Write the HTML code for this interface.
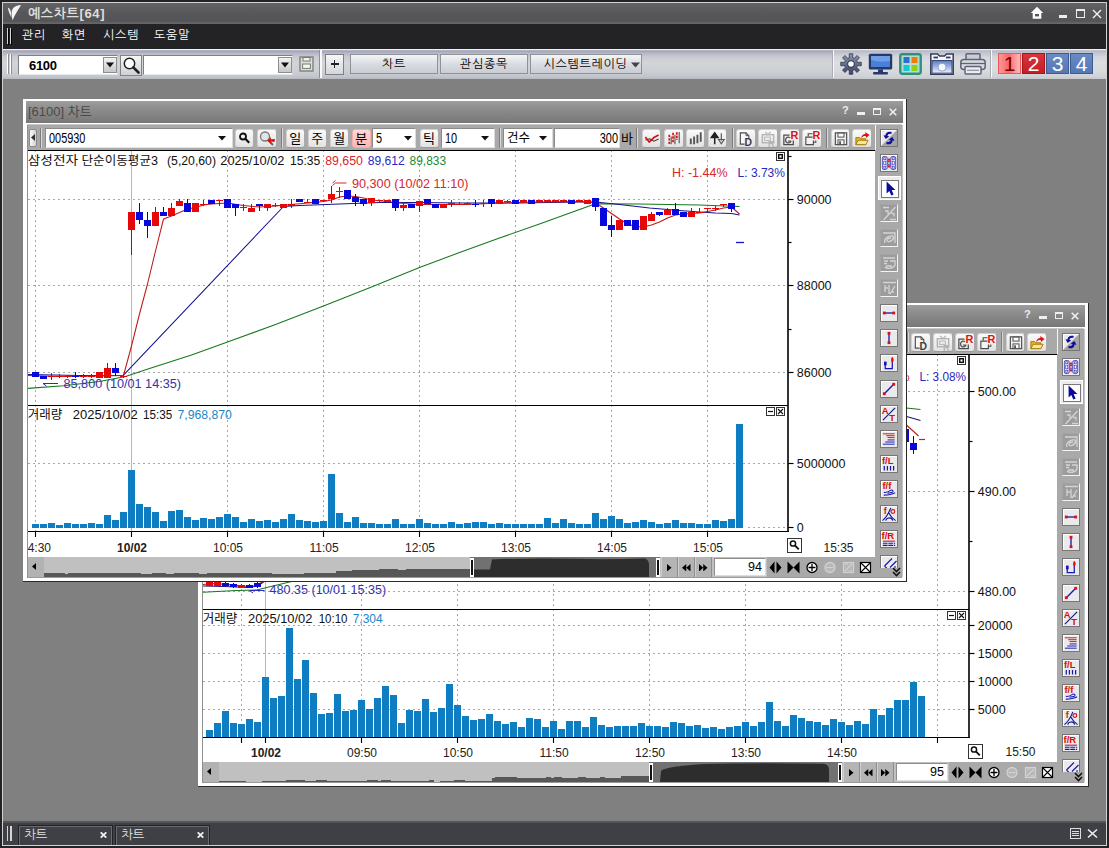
<!DOCTYPE html><html lang="ko"><head><meta charset="utf-8"><title>예스차트</title><style>
html,body{margin:0;padding:0}
body{width:1109px;height:848px;overflow:hidden;background:#808080;position:relative;font-family:'Liberation Sans','Noto Sans CJK KR',sans-serif;font-size:12px;color:#000}
div,span,svg{box-sizing:border-box}
.a{position:absolute}
.t{position:absolute;white-space:nowrap;line-height:1}
.btn{position:absolute;border:1px solid #8e9299;background:linear-gradient(#f4f5f7,#d9dce1 50%,#c9ccd3);text-align:center;font-family:'Liberation Sans','NanumGothic','Noto Sans CJK KR',sans-serif;font-size:12px;line-height:18px;color:#000}
.cb{position:absolute;border-radius:3px;background:linear-gradient(#fafafa,#e2e2e2);border:1px solid #d0d0d0;border-bottom-color:#9a9a9a;border-right-color:#aaa}
.ti{position:absolute;width:18px;height:18px;background:#e9e9e9;border:1px solid #f4f4f4;border-right-color:#777;border-bottom-color:#777}
</style></head><body><div style="position:absolute;left:0px;top:0px;width:1109px;height:848px;background:#232325"></div><div style="position:absolute;left:2px;top:2px;width:1105px;height:844px;background:#d2d2d4"></div><div style="position:absolute;left:3px;top:3px;width:1103px;height:842px;background:#808080"></div><div style="position:absolute;left:3px;top:3px;width:1103px;height:21px;background:linear-gradient(#626264,#58585a 45%,#545456 85%,#6a6a6c)"></div><svg class="a" style="left:6px;top:4px" width="18" height="18" viewBox="0 0 18 18"><path d="M15.2 1 C12 1.2 9.5 2 8 3.2 C5.4 5.6 4.8 9.5 6.7 16.2 C7.2 12 8.5 6.8 15.2 1Z" fill="#f4f4f4"/><path d="M15.2 1 C11.5 6.5 8.5 11.5 6.7 16.2 C6 12 7 6 15.2 1Z" fill="#f4f4f4"/><path d="M1.8 3.4 C3.6 4 5 6 5 9 C5 11 5.3 12.5 5.7 13.7 C4 11 2.4 7 1.8 3.4Z" fill="#ededed"/></svg><div class="t" style="left:28px;top:7px;font-family:'Liberation Sans','NanumGothic','Noto Sans CJK KR',sans-serif;font-size:13px;font-weight:bold;color:#dededa;letter-spacing:0.65px">예스차트[64]</div><svg class="a" style="left:1030px;top:6px" width="14" height="14" viewBox="0 0 14 14"><path d="M7 0.8 L13.2 7 L11.3 7 L11.3 12.8 L2.7 12.8 L2.7 7 L0.8 7Z" fill="#fff"/><rect x="5" y="8" width="4" height="2.4" fill="#58585a"/></svg><div style="position:absolute;left:1059px;top:15.2px;width:8px;height:2.4px;background:#ececec"></div><div style="position:absolute;left:1076px;top:9px;width:9px;height:9px;border:1.4px solid #ececec;border-top-width:2.2px"></div><svg class="a" style="left:1092px;top:9px" width="10" height="10" viewBox="0 0 10 10"><path d="M1 1 L9 9 M9 1 L1 9" stroke="#f0f0f0" stroke-width="1.4"/></svg><div style="position:absolute;left:3px;top:24px;width:1103px;height:25px;background:#232325"></div><div style="position:absolute;left:7px;top:28px;width:1.3px;height:16px;background:#d4d4d4;box-shadow:1px 1px 0 #000"></div><div style="position:absolute;left:10px;top:28px;width:1.3px;height:16px;background:#d4d4d4;box-shadow:1px 1px 0 #000"></div><div class="t" style="left:22px;top:29px;font-family:'Liberation Sans','NanumGothic','Noto Sans CJK KR',sans-serif;font-size:12px;color:#fff;letter-spacing:0.8px">관리</div><div class="t" style="left:62px;top:29px;font-family:'Liberation Sans','NanumGothic','Noto Sans CJK KR',sans-serif;font-size:12px;color:#fff;letter-spacing:0.8px">화면</div><div class="t" style="left:103px;top:29px;font-family:'Liberation Sans','NanumGothic','Noto Sans CJK KR',sans-serif;font-size:12px;color:#fff;letter-spacing:0.8px">시스템</div><div class="t" style="left:154px;top:29px;font-family:'Liberation Sans','NanumGothic','Noto Sans CJK KR',sans-serif;font-size:12px;color:#fff;letter-spacing:0.8px">도움말</div><div style="position:absolute;left:3px;top:49px;width:1103px;height:30px;background:linear-gradient(#eeeef4 0,#eeeef4 1.2px,#9d9fb3 1.6px,#b4b6c3 4px,#c9cbd1 8px,#d2d4d7 14px,#cdd0d3 22px,#c1c4c9 28px,#b6b9bf 30px)"></div><div style="position:absolute;left:834px;top:50px;width:272px;height:29px;background:rgba(255,255,255,0.22)"></div><div style="position:absolute;left:7px;top:54px;width:1px;height:20px;background:#fff"></div><div style="position:absolute;left:8px;top:54px;width:1px;height:20px;background:#8a8d94"></div><div style="position:absolute;left:10px;top:54px;width:1px;height:20px;background:#fff"></div><div style="position:absolute;left:11px;top:54px;width:1px;height:20px;background:#8a8d94"></div><div style="position:absolute;left:18px;top:55px;width:100px;height:20px;background:#fff;border:1px solid #7c8087;border-right-color:#cfd2d8;border-bottom-color:#e4e6ea"></div><div class="t" style="left:29px;top:59px;font-family:'Liberation Sans','NanumGothic','Noto Sans CJK KR',sans-serif;font-size:13px;font-weight:bold;letter-spacing:-0.3px">6100</div><div style="position:absolute;left:103px;top:57px;width:14px;height:16px;background:linear-gradient(#f2f2f2,#c8c8c8);border:1px solid #8d8d8d"></div><svg class="a" style="left:106px;top:62px" width="8" height="6"><path d="M0 0.5 L8 0.5 L4 5.5Z" fill="#111"/></svg><div style="position:absolute;left:120px;top:55px;width:22px;height:21px;background:linear-gradient(#f6f6f6,#cfd1d5);border:1px solid #80838a"></div><svg class="a" style="left:122px;top:56px" width="19" height="19" viewBox="0 0 19 19"><circle cx="7.5" cy="7.5" r="5.2" fill="#fdfdfd" stroke="#222" stroke-width="1.5"/><path d="M11.3 11.3 L16.5 16.5" stroke="#222" stroke-width="2.6" stroke-linecap="round"/></svg><div style="position:absolute;left:143px;top:55px;width:150px;height:20px;background:#fff;border:1px solid #7c8087;border-right-color:#cfd2d8;border-bottom-color:#e4e6ea"></div><div style="position:absolute;left:278px;top:57px;width:14px;height:16px;background:linear-gradient(#f2f2f2,#c8c8c8);border:1px solid #8d8d8d"></div><svg class="a" style="left:281px;top:62px" width="8" height="6"><path d="M0 0.5 L8 0.5 L4 5.5Z" fill="#111"/></svg><svg class="a" style="left:299px;top:56px" width="15" height="16" viewBox="0 0 15 16"><rect x="1" y="1" width="13" height="14" fill="#dcdedb" stroke="#787a74" stroke-width="1.3"/><rect x="4" y="1.5" width="7" height="3.5" fill="#f3f3ef" stroke="#787a74" stroke-width="1"/><rect x="3.6" y="8" width="7.8" height="4.4" fill="#f6f6f2" stroke="#787a74" stroke-width="1"/></svg><div style="position:absolute;left:319px;top:50px;width:1px;height:28px;background:#8c8f96"></div><div style="position:absolute;left:320px;top:50px;width:2px;height:28px;background:#f7f8fa"></div><div style="position:absolute;left:325px;top:54px;width:19px;height:21px;background:linear-gradient(#f6f6f6,#d4d6da);border:1px solid #7d8087"></div><div style="position:absolute;left:330.5px;top:63.2px;width:8px;height:1.8px;background:#222"></div><div style="position:absolute;left:333.6px;top:60px;width:1.8px;height:8px;background:#222"></div><div class="btn" style="left:350px;top:54px;width:88px;height:20px;letter-spacing:0.7px">차트</div><div class="btn" style="left:440px;top:54px;width:88px;height:20px;letter-spacing:0.7px">관심종목</div><div class="btn" style="left:530px;top:54px;width:112px;height:20px;padding-right:1px;letter-spacing:0.7px">시스템트레이딩</div><svg class="a" style="left:630.5px;top:62px" width="9" height="6"><path d="M0 0.5 L9 0.5 L4.5 5.5Z" fill="#444"/></svg><div style="position:absolute;left:832px;top:50px;width:1px;height:28px;background:#a9acb5"></div><div style="position:absolute;left:833px;top:50px;width:1px;height:28px;background:#f7f8fa"></div><svg class="a" style="left:840px;top:53px" width="22" height="22" viewBox="-11 -11 22 22"><defs><linearGradient id="gg" x1="0" y1="0" x2="0" y2="1"><stop offset="0" stop-color="#8e96ac"/><stop offset="1" stop-color="#3c4564"/></linearGradient></defs><g fill="url(#gg)" stroke="#2e3550" stroke-width="0.8"><path d="M-1.81 -10.24 L1.81 -10.24 L1.60 -6.40 L3.40 -5.66 L5.97 -8.52 L8.52 -5.97 L5.66 -3.40 L6.40 -1.60 L10.24 -1.81 L10.24 1.81 L6.40 1.60 L5.66 3.40 L8.52 5.97 L5.97 8.52 L3.40 5.66 L1.60 6.40 L1.81 10.24 L-1.81 10.24 L-1.60 6.40 L-3.40 5.66 L-5.97 8.52 L-8.52 5.97 L-5.66 3.40 L-6.40 1.60 L-10.24 1.81 L-10.24 -1.81 L-6.40 -1.60 L-5.66 -3.40 L-8.52 -5.97 L-5.97 -8.52 L-3.40 -5.66 L-1.60 -6.40Z"/></g><circle r="3.7" fill="#2e3550"/><circle r="2.8" fill="#fbfbfd"/></svg><svg class="a" style="left:868px;top:53px" width="25" height="22" viewBox="0 0 25 22"><rect x="0.8" y="0.8" width="23.4" height="15.6" rx="1.5" fill="#27386b"/><rect x="3" y="3" width="19" height="11" fill="#4a7fd6"/><path d="M3 3 H22 V8 Q12 10 3 7Z" fill="#6ea0ea"/><rect x="10" y="16.4" width="5" height="3" fill="#27386b"/><rect x="5" y="19" width="15" height="2.4" rx="1" fill="#27386b"/></svg><svg class="a" style="left:899px;top:53px" width="23" height="22" viewBox="0 0 23 22"><rect x="1.2" y="1.2" width="20.6" height="19.6" rx="2" fill="#8ccdbd" stroke="#2f8f7c" stroke-width="2.2"/><rect x="3.2" y="3" width="16.6" height="16" fill="#c4e6dc" opacity="0.7"/><rect x="4.5" y="4" width="6" height="6" fill="#2b6fd0"/><rect x="12.5" y="4" width="6" height="6" fill="#f07a10"/><rect x="4.5" y="12" width="6" height="6" fill="#19c6d8"/><rect x="12.5" y="12" width="6" height="6" fill="#8fd11a"/></svg><svg class="a" style="left:930px;top:53px" width="24" height="22" viewBox="0 0 24 22"><defs><linearGradient id="cg" x1="0" y1="0" x2="0" y2="1"><stop offset="0" stop-color="#5a78c8"/><stop offset="1" stop-color="#eef2fc"/></linearGradient></defs><path d="M0.8 1 H7.5 L9.5 3 H14.5 L16.5 1 H23.2 V21.2 H0.8Z" fill="#f4f6fb" stroke="#323c60" stroke-width="1.5"/><rect x="3.5" y="3.6" width="4.5" height="1.8" fill="#323c60"/><rect x="16" y="3.6" width="4.5" height="1.8" fill="#323c60"/><rect x="2" y="7.5" width="20" height="12.6" fill="url(#cg)" stroke="#323c60" stroke-width="0.9"/><circle cx="12" cy="14.2" r="4" fill="#f6f8fd" stroke="#8a9ad0" stroke-width="0.9"/></svg><svg class="a" style="left:960px;top:53px" width="26" height="22" viewBox="0 0 26 22"><rect x="6" y="0.8" width="14" height="8" rx="1" fill="#c9cdd6" stroke="#5d6476" stroke-width="1.5"/><rect x="0.8" y="6.5" width="24.4" height="10" rx="3" fill="#d7dae1" stroke="#5d6476" stroke-width="1.5"/><path d="M1 10.5 H25" stroke="#5d6476" stroke-width="1.3"/><rect x="5" y="13.5" width="16" height="7.5" rx="1" fill="#e9ebf0" stroke="#5d6476" stroke-width="1.5"/><path d="M7 17.3 H19" stroke="#8a90a0" stroke-width="1.2"/></svg><div style="position:absolute;left:990px;top:50px;width:1px;height:28px;background:#a9acb5"></div><div style="position:absolute;left:991px;top:50px;width:1px;height:28px;background:#f7f8fa"></div><div class="a" style="left:998px;top:53px;width:23px;height:21px;background:linear-gradient(90deg,#fa9a9a,#f66 45%,#fbb);border:1px solid #e55;color:#7a0000;font-size:21px;line-height:20px;text-align:center;font-family:'Liberation Sans','Noto Sans CJK KR',sans-serif">1</div><div class="a" style="left:1022px;top:53px;width:23px;height:21px;background:linear-gradient(#d8343a,#c41e26);border:1px solid #a2161c;color:#fff;font-size:21px;line-height:20px;text-align:center;font-family:'Liberation Sans','Noto Sans CJK KR',sans-serif">2</div><div class="a" style="left:1046px;top:53px;width:23px;height:21px;background:linear-gradient(#6a8bc4,#5577b3);border:1px solid #3d5a93;color:#fff;font-size:21px;line-height:20px;text-align:center;font-family:'Liberation Sans','Noto Sans CJK KR',sans-serif">3</div><div class="a" style="left:1070px;top:53px;width:23px;height:21px;background:linear-gradient(#6a8bc4,#5577b3);border:1px solid #3d5a93;color:#fff;font-size:21px;line-height:20px;text-align:center;font-family:'Liberation Sans','Noto Sans CJK KR',sans-serif">4</div><div style="position:absolute;left:3px;top:821px;width:1103px;height:24px;background:#3f4046"></div><div style="position:absolute;left:3px;top:821px;width:1103px;height:2px;background:#55565a"></div><div style="position:absolute;left:7px;top:826px;width:1.3px;height:14.5px;background:#d4d4d4"></div><div style="position:absolute;left:10px;top:826px;width:1.5px;height:14.5px;background:#d4d4d4"></div><div style="position:absolute;left:18px;top:825px;width:95px;height:20px;background:#222226"></div><div style="position:absolute;left:19px;top:826px;width:93px;height:19px;background:#6a6b70"></div><div style="position:absolute;left:20px;top:827px;width:91px;height:18px;background:#3f4046"></div><div class="t" style="left:24px;top:829px;font-family:'Liberation Sans','NanumGothic','Noto Sans CJK KR',sans-serif;font-size:12.5px;color:#e4e4e4">차트</div><svg class="a" style="left:100px;top:832px" width="7" height="6" viewBox="0 0 7 6"><path d="M0.7 0.3 L6.3 5.7 M6.3 0.3 L0.7 5.7" stroke="#f0f0f0" stroke-width="1.7"/></svg><div style="position:absolute;left:115px;top:825px;width:95px;height:20px;background:#222226"></div><div style="position:absolute;left:116px;top:826px;width:93px;height:19px;background:#6a6b70"></div><div style="position:absolute;left:117px;top:827px;width:91px;height:18px;background:#3f4046"></div><div class="t" style="left:121px;top:829px;font-family:'Liberation Sans','NanumGothic','Noto Sans CJK KR',sans-serif;font-size:12.5px;color:#e4e4e4">차트</div><svg class="a" style="left:197px;top:832px" width="7" height="6" viewBox="0 0 7 6"><path d="M0.7 0.3 L6.3 5.7 M6.3 0.3 L0.7 5.7" stroke="#f0f0f0" stroke-width="1.7"/></svg><svg class="a" style="left:1070px;top:828px" width="11" height="11" viewBox="0 0 11 11"><rect x="0.5" y="0.5" width="10" height="10" fill="none" stroke="#ddd"/><path d="M2 3.5 H9 M2 5.5 H9 M2 7.5 H9" stroke="#ddd"/></svg><svg class="a" style="left:1087px;top:828px" width="11" height="11" viewBox="0 0 11 11"><path d="M1 1.5 L10 9.5 M10 1.5 L1 9.5" stroke="#f0f0f0" stroke-width="1.6"/></svg><div style="position:absolute;left:198px;top:303px;width:891px;height:484px;background:#fff;border-right:1px solid #2a2a2a;border-bottom:1px solid #2a2a2a"></div><div style="position:absolute;left:201px;top:305px;width:884px;height:21.5px;background:linear-gradient(#9e9e9e,#8d8d8d 35%,#828282 70%,#787878)"></div><div class="t" style="left:203px;top:309px;font-family:'Liberation Sans','Noto Sans CJK KR',sans-serif;font-size:13px;color:#4a4a4a">[6100] 차트</div><div class="t" style="left:1024px;top:309px;font-family:'Liberation Sans','Noto Sans CJK KR',sans-serif;font-size:11px;font-weight:bold;color:#ececec">?</div><div style="position:absolute;left:1039px;top:316px;width:8px;height:3px;background:#efefef"></div><div style="position:absolute;left:1055px;top:312px;width:8px;height:7px;border:1.5px solid #efefef;border-top-width:2px"></div><svg class="a" style="left:1071px;top:312px" width="8" height="8" viewBox="0 0 8 8"><path d="M0.7 0.7 L7.3 7.3 M7.3 0.7 L0.7 7.3" stroke="#f2f2f2" stroke-width="1.5"/></svg><div style="position:absolute;left:202px;top:329px;width:855px;height:25px;background:#a9a9a9"></div><div style="position:absolute;left:202px;top:328px;width:882px;height:1px;background:#c9c9c9"></div><div style="position:absolute;left:204px;top:333px;width:8px;height:18px;background:linear-gradient(90deg,#fbfbfb,#cfcfcf);border:1px solid #8b8b8b;border-radius:2px"></div><svg class="a" style="left:206px;top:338px" width="4" height="7"><path d="M4 0 L4 7 L0 3.5Z" fill="#333"/></svg><div style="position:absolute;left:215px;top:332px;width:1px;height:20px;background:#7d7d7d"></div><div style="position:absolute;left:216px;top:332px;width:1px;height:20px;background:#d8d8d8"></div><div style="position:absolute;left:220px;top:331.5px;width:188px;height:20.5px;background:#fff;border:1px solid #8a8a8a;border-right-color:#dcdcdc;border-bottom-color:#e6e6e6"></div><div class="t" style="left:223.5px;top:334.5px;font-family:'Liberation Sans','Noto Sans CJK KR',sans-serif;font-size:14px;transform:scaleX(0.78);transform-origin:0 0">005930</div><svg class="a" style="left:393px;top:340px" width="8" height="5"><path d="M0 0 L8 0 L4 4.5Z" fill="#111"/></svg><div class="cb" style="left:410px;top:332.5px;width:19px;height:19.5px;"><svg width="17" height="17" viewBox="0 0 17 17"><circle cx="7" cy="6.5" r="3" fill="none" stroke="#111" stroke-width="1.8"/><path d="M9.3 8.8 L13.2 12.7" stroke="#111" stroke-width="2.2"/></svg></div><div class="cb" style="left:432px;top:332.5px;width:20px;height:19.5px;"><svg width="18" height="17" viewBox="0 0 18 17"><circle cx="7" cy="6.5" r="4.5" fill="#e4e4e4" stroke="#777" stroke-width="1.3"/><path d="M10 10 L15 15" stroke="#666" stroke-width="2"/><path d="M9 10.5 L13 7 L12.8 9.3 L17 9 L16.5 12 L13 11.6 L13.5 14Z" fill="#e01010"/></svg></div><div style="position:absolute;left:456px;top:332px;width:1px;height:20px;background:#7d7d7d"></div><div style="position:absolute;left:457px;top:332px;width:1px;height:20px;background:#d8d8d8"></div><div class="cb" style="left:461px;top:332.5px;width:18.5px;height:19.5px;font-family:'Liberation Sans','Noto Sans CJK KR',sans-serif;font-size:13px;line-height:17px;text-align:center">일</div><div class="cb" style="left:483px;top:332.5px;width:18.5px;height:19.5px;font-family:'Liberation Sans','Noto Sans CJK KR',sans-serif;font-size:13px;line-height:17px;text-align:center">주</div><div class="cb" style="left:505px;top:332.5px;width:18.5px;height:19.5px;font-family:'Liberation Sans','Noto Sans CJK KR',sans-serif;font-size:13px;line-height:17px;text-align:center">월</div><div class="cb" style="left:527px;top:332.5px;width:18.5px;height:19.5px;background:linear-gradient(#ffd9d9,#ffb4b4);border-color:#f0b0b0;font-family:'Liberation Sans','Noto Sans CJK KR',sans-serif;font-size:13px;line-height:17px;text-align:center">분</div><div style="position:absolute;left:547px;top:331.5px;width:44px;height:20.5px;background:#fff;border:1px solid #8a8a8a;border-right-color:#dcdcdc;border-bottom-color:#e6e6e6"></div><div class="t" style="left:550.5px;top:334.5px;font-family:'Liberation Sans','Noto Sans CJK KR',sans-serif;font-size:14px;transform:scaleX(0.78);transform-origin:0 0">5</div><svg class="a" style="left:579px;top:340px" width="8" height="5"><path d="M0 0 L8 0 L4 4.5Z" fill="#111"/></svg><div class="cb" style="left:594.5px;top:332.5px;width:19px;height:19.5px;font-family:'Liberation Sans','Noto Sans CJK KR',sans-serif;font-size:13px;line-height:17px;text-align:center">틱</div><div style="position:absolute;left:616px;top:331.5px;width:54px;height:20.5px;background:#fff;border:1px solid #8a8a8a;border-right-color:#dcdcdc;border-bottom-color:#e6e6e6"></div><div class="t" style="left:619.5px;top:334.5px;font-family:'Liberation Sans','Noto Sans CJK KR',sans-serif;font-size:14px;transform:scaleX(0.78);transform-origin:0 0">10</div><svg class="a" style="left:656px;top:340px" width="8" height="5"><path d="M0 0 L8 0 L4 4.5Z" fill="#111"/></svg><div style="position:absolute;left:674px;top:332px;width:1px;height:20px;background:#7d7d7d"></div><div style="position:absolute;left:675px;top:332px;width:1px;height:20px;background:#d8d8d8"></div><div style="position:absolute;left:678px;top:331.5px;width:50px;height:20.5px;background:#fff;border:1px solid #8a8a8a;border-right-color:#dcdcdc;border-bottom-color:#e6e6e6"></div><div class="t" style="left:682px;top:335.5px;font-family:'Liberation Sans','Noto Sans CJK KR',sans-serif;font-size:12.5px">건수</div><svg class="a" style="left:714px;top:340px" width="8" height="5"><path d="M0 0 L8 0 L4 4.5Z" fill="#111"/></svg><div style="position:absolute;left:729px;top:331.5px;width:66px;height:20.5px;background:#fff;border:1px solid #8a8a8a;border-right-color:#dcdcdc;border-bottom-color:#e6e6e6"></div><div class="t" style="left:729px;width:64px;text-align:right;top:334.5px;font-family:'Liberation Sans','Noto Sans CJK KR',sans-serif;font-size:14px;transform:scaleX(0.78);transform-origin:100% 0">300</div><div class="t" style="left:796px;top:335.5px;font-family:'Liberation Sans','Noto Sans CJK KR',sans-serif;font-size:13px">바</div><div style="position:absolute;left:811px;top:332px;width:1px;height:20px;background:#7d7d7d"></div><div style="position:absolute;left:812px;top:332px;width:1px;height:20px;background:#d8d8d8"></div><div class="cb" style="left:816.5px;top:332.5px;width:19.5px;height:19.5px;"><svg width="18" height="17" viewBox="0 0 19 18" style="display:block"><path d="M2.5 10.5 L7 9.2 L11.5 11.8 L16.5 9.5" stroke="#3a3a3a" stroke-width="1.1" fill="none"/><path d="M2.5 7.5 L6.5 12.8 L11.5 8 L16.5 5.2" stroke="#e01010" stroke-width="1.8" fill="none" stroke-linejoin="round"/></svg></div><div class="cb" style="left:839px;top:332.5px;width:19.5px;height:19.5px;"><svg width="18" height="17" viewBox="0 0 19 18" style="display:block"><path d="M4.5 5 v10 M8.5 3 v11 M12.5 2.5 v8" stroke="#e01010" stroke-width="1.8" stroke-dasharray="2.5 1.2"/><path d="M6.5 7 v8 M10.5 5 v10 M15 2 v12" stroke="#555" stroke-width="1.2"/></svg></div><div class="cb" style="left:860.5px;top:332.5px;width:19.5px;height:19.5px;"><svg width="18" height="17" viewBox="0 0 19 18" style="display:block"><path d="M4 9 v6 M7.5 7 v8 M11 5 v9 M14.5 2.5 v10" stroke="#555" stroke-width="2"/></svg></div><div class="cb" style="left:882.5px;top:332.5px;width:19.5px;height:19.5px;"><svg width="18" height="17" viewBox="0 0 19 18" style="display:block"><path d="M6 15 v-9 M2.5 8 L6 3 L9.5 8Z" fill="#222" stroke="#222" stroke-width="1.6"/><path d="M13 3.5 v8 M10 10 L13 14.5 L16 10Z" fill="#eee" stroke="#555" stroke-width="1.2"/></svg></div><div class="cb" style="left:911px;top:332.5px;width:19.5px;height:19.5px;"><svg width="18" height="17" viewBox="0 0 19 18" style="display:block"><path d="M3.5 3 h6 l3 3 v9 h-9Z" fill="#f8f8f8" stroke="#4c4c4c" stroke-width="1.2"/><path d="M9.5 3 v3 h3" fill="none" stroke="#4c4c4c" stroke-width="1"/><rect x="8" y="8.5" width="8" height="8.5" fill="#f0f0f0"/><text x="8" y="17" font-size="11" font-weight="bold" fill="#3c3c3c" font-family="Liberation Sans,sans-serif">D</text></svg></div><div class="cb" style="left:933px;top:332.5px;width:19.5px;height:19.5px;"><svg width="18" height="17" viewBox="0 0 19 18" style="display:block"><path d="M6.5 2 l3 3 l3 -3" stroke="#b4b4b4" stroke-width="1.2" fill="none"/><rect x="3.5" y="5" width="12" height="8.5" fill="none" stroke="#b4b4b4" stroke-width="1.5"/><rect x="6" y="7.5" width="6" height="3.5" fill="none" stroke="#b4b4b4" stroke-width="1"/><text x="9.5" y="17.5" font-size="9.5" font-weight="bold" fill="#b4b4b4" font-family="Liberation Sans,sans-serif">R</text></svg></div><div class="cb" style="left:955px;top:332.5px;width:19.5px;height:19.5px;"><svg width="18" height="17" viewBox="0 0 19 18" style="display:block"><path d="M9 5.5 H3 V15.5 H13 V11" fill="none" stroke="#4c4c4c" stroke-width="1.3"/><path d="M10.5 11.8 a3 3 0 1 1 -1 -3.6 M7.5 11.8 h3.4" stroke="#5a5a5a" stroke-width="1.4" fill="none"/><text x="10" y="10" font-size="11.5" font-weight="bold" fill="#e01010" font-family="Liberation Sans,sans-serif">R</text></svg></div><div class="cb" style="left:977px;top:332.5px;width:19.5px;height:19.5px;"><svg width="18" height="17" viewBox="0 0 19 18" style="display:block"><path d="M5.5 7 V4 H10" fill="none" stroke="#4c4c4c" stroke-width="1.2"/><path d="M10 7.5 H3 V15.5 H11 V11" fill="#f4f4f4" stroke="#4c4c4c" stroke-width="1.2"/><path d="M11 13 H13.5 V11" fill="none" stroke="#4c4c4c" stroke-width="1.2"/><text x="10" y="10" font-size="11.5" font-weight="bold" fill="#e01010" font-family="Liberation Sans,sans-serif">R</text></svg></div><div class="cb" style="left:1005.5px;top:332.5px;width:19.5px;height:19.5px;"><svg width="18" height="17" viewBox="0 0 19 18" style="display:block"><rect x="3.5" y="3" width="12" height="12.5" fill="#f0f0f0" stroke="#4a4a4a" stroke-width="1.2"/><rect x="6.3" y="3.3" width="6.4" height="4.2" fill="#fafafa" stroke="#4a4a4a" stroke-width="1"/><rect x="6.3" y="10.5" width="6.4" height="5" fill="#fafafa" stroke="#4a4a4a" stroke-width="1"/><rect x="7.6" y="12" width="1.8" height="3.5" fill="#4a4a4a"/></svg></div><div class="cb" style="left:1027px;top:332.5px;width:19.5px;height:19.5px;"><svg width="18" height="17" viewBox="0 0 19 18" style="display:block"><path d="M3 15.5 v-7.5 h4 l1.3 1.3 h5.2 v6.2Z" fill="#e6b422" stroke="#9a7406" stroke-width="0.9"/><path d="M3 15.5 l2.4 -4.6 h10.6 l-2.4 4.6Z" fill="#fde58e" stroke="#9a7406" stroke-width="0.9"/><path d="M8.5 8.5 C9.3 5.2 11.2 4 13.2 4.2 L12.8 2 L17.5 5.2 L13.8 8.4 L13.5 6.3 C11.8 6 10.2 6.6 8.5 8.5Z" fill="#e01010"/></svg></div><div style="position:absolute;left:906.5px;top:332px;width:1px;height:20px;background:#7d7d7d"></div><div style="position:absolute;left:907.5px;top:332px;width:1px;height:20px;background:#d8d8d8"></div><div style="position:absolute;left:1001px;top:332px;width:1px;height:20px;background:#7d7d7d"></div><div style="position:absolute;left:1002px;top:332px;width:1px;height:20px;background:#d8d8d8"></div><div style="position:absolute;left:1057px;top:329px;width:28px;height:453px;background:#a9a9a9"></div><div style="position:absolute;left:1084px;top:329px;width:1px;height:453px;background:#c4c4c4"></div><div style="position:absolute;left:1056.5px;top:329px;width:1.5px;height:25px;background:#f4f4f4"></div><div style="position:absolute;left:1062px;top:333.0px;width:18px;height:18px;background:#eaeaea;border:1px solid #767676;box-shadow:inset 1px 1px 0 #fff"></div><svg class="a" style="left:1063px;top:334.0px" width="16" height="16" viewBox="0 0 17 17"><path d="M0 17 L17 0 L17 17Z" fill="#a4a4a4"/><path d="M11.2 2 L11.2 4.2 C8.6 3.6 7 4.6 6.9 6.3 L8.9 6.6 L5 9.6 L2.6 5.6 L4.7 5.9 C4.8 2.6 8 1.2 11.2 2Z" fill="#0c0c9c"/><path d="M5.8 15 L5.8 12.8 C8.4 13.4 10 12.4 10.1 10.7 L8.1 10.4 L12 7.4 L14.4 11.4 L12.3 11.1 C12.2 14.4 9 15.8 5.8 15Z" fill="#0c0c9c"/></svg><div style="position:absolute;left:1062px;top:358.05px;width:18px;height:18px;background:#eaeaea;border:1px solid #767676;box-shadow:inset 1px 1px 0 #fff"></div><svg class="a" style="left:1063px;top:359.05px" width="16" height="16" viewBox="0 0 17 17"><rect x="1.4" y="1.6" width="5.2" height="13.8" rx="1.8" fill="#f4f4ff" stroke="#3030b8" stroke-width="0.9"/><rect x="10.4" y="1.6" width="5.2" height="13.8" rx="1.8" fill="#f4f4ff" stroke="#3030b8" stroke-width="0.9"/><rect x="2.9" y="3" width="2.2" height="2" fill="#fff" stroke="#3030b8" stroke-width="0.7"/><rect x="2.9" y="6.6" width="2.2" height="3.8" fill="#fff" stroke="#3030b8" stroke-width="0.7"/><rect x="2.9" y="12" width="2.2" height="2" fill="#fff" stroke="#3030b8" stroke-width="0.7"/><rect x="11.9" y="3" width="2.2" height="2" fill="#fff" stroke="#3030b8" stroke-width="0.7"/><rect x="11.9" y="6.6" width="2.2" height="3.8" fill="#fff" stroke="#3030b8" stroke-width="0.7"/><rect x="11.9" y="12" width="2.2" height="2" fill="#fff" stroke="#3030b8" stroke-width="0.7"/><rect x="7.5" y="6.8" width="2" height="3.4" fill="#fff" stroke="#3030b8" stroke-width="0.7"/><path d="M8.5 3 L10 5.4 H7Z M8.5 14 L10 11.6 H7Z" fill="#e01010"/><path d="M6.8 6 h3.4 M6.8 11 h3.4" stroke="#e01010" stroke-width="0.9"/></svg><div style="position:absolute;left:1060px;top:380.40000000000003px;width:23px;height:24px;background:#ececec;border:1px solid #fff"></div><div style="position:absolute;left:1063.3px;top:383.90000000000003px;width:17.6px;height:17.8px;background:#fff;border:1px solid #7a7a7a"></div><svg class="a" style="left:1063.5px;top:384.3px" width="17" height="17" viewBox="0 0 17 17"><path d="M4.6 1.6 L4.6 13.4 L7.3 10.9 L9.3 15.6 L11.6 14.6 L9.6 10 L13.4 10Z" fill="#0a0a9c"/></svg><div style="position:absolute;left:1062px;top:408.15px;width:18px;height:18px;background:#9c9c9c;border-right:1.5px solid #f4f4f4;border-bottom:1.5px solid #f4f4f4;border-left:1px solid #a4a4a4;border-top:1px solid #a4a4a4"></div><svg class="a" style="left:1062.5px;top:408.65px" width="17" height="17" viewBox="0 0 17 17"><path d="M2 2.5 h6 M9 14.5 h6 M14.5 2 L2.5 15 M4 6 h3 v3 M10 8.5 h3 v3" stroke="#d4d4d4" stroke-width="1.3" fill="none"/></svg><div style="position:absolute;left:1062px;top:433.2px;width:18px;height:18px;background:#9c9c9c;border-right:1.5px solid #f4f4f4;border-bottom:1.5px solid #f4f4f4;border-left:1px solid #a4a4a4;border-top:1px solid #a4a4a4"></div><svg class="a" style="left:1062.5px;top:433.7px" width="17" height="17" viewBox="0 0 17 17"><path d="M2 3 h12 v10 M4 13 c-2 -4 4 -8 8 -7 c2 3 -3 7 -6 5 c0 -2 2 -3 4 -3" stroke="#d4d4d4" stroke-width="1.3" fill="none"/></svg><div style="position:absolute;left:1062px;top:458.25px;width:18px;height:18px;background:#9c9c9c;border-right:1.5px solid #f4f4f4;border-bottom:1.5px solid #f4f4f4;border-left:1px solid #a4a4a4;border-top:1px solid #a4a4a4"></div><svg class="a" style="left:1062.5px;top:458.75px" width="17" height="17" viewBox="0 0 17 17"><path d="M2 3 h12 M3 6 h4 M3 8.5 h3 M9 6 h5 v4 c-2 4 -8 4 -10 2 M5 11 h6" stroke="#d4d4d4" stroke-width="1.3" fill="none"/></svg><div style="position:absolute;left:1062px;top:483.3px;width:18px;height:18px;background:#9c9c9c;border-right:1.5px solid #f4f4f4;border-bottom:1.5px solid #f4f4f4;border-left:1px solid #a4a4a4;border-top:1px solid #a4a4a4"></div><svg class="a" style="left:1062.5px;top:483.8px" width="17" height="17" viewBox="0 0 17 17"><path d="M2 2.5 h13 M4 5 v7 M4 8 h3 M8 5 v9 M14 6 L9 14 M10 12 h3" stroke="#d4d4d4" stroke-width="1.3" fill="none"/></svg><div style="position:absolute;left:1062px;top:508.35px;width:18px;height:18px;background:#eaeaea;border:1px solid #767676;box-shadow:inset 1px 1px 0 #fff"></div><svg class="a" style="left:1063px;top:509.35px" width="16" height="16" viewBox="0 0 17 17"><path d="M3 8.5 h11" stroke="#1414b8" stroke-width="1.4"/><rect x="2" y="7" width="3" height="3" fill="#e01010"/><rect x="12" y="7" width="3" height="3" fill="#e01010"/></svg><div style="position:absolute;left:1062px;top:533.4px;width:18px;height:18px;background:#eaeaea;border:1px solid #767676;box-shadow:inset 1px 1px 0 #fff"></div><svg class="a" style="left:1063px;top:534.4px" width="16" height="16" viewBox="0 0 17 17"><path d="M8.5 3 v11" stroke="#1414b8" stroke-width="1.4"/><rect x="7" y="2" width="3" height="3" fill="#e01010"/><rect x="7" y="12" width="3" height="3" fill="#e01010"/></svg><div style="position:absolute;left:1062px;top:558.45px;width:18px;height:18px;background:#eaeaea;border:1px solid #767676;box-shadow:inset 1px 1px 0 #fff"></div><svg class="a" style="left:1063px;top:559.45px" width="16" height="16" viewBox="0 0 17 17"><path d="M4.5 8 v6.5 h7.5 v-8" stroke="#1414b8" stroke-width="1.3" fill="none"/><rect x="3.2" y="7" width="2.8" height="4" fill="#1414b8"/><path d="M12 2 v6" stroke="#e01010" stroke-width="1.2"/><rect x="10.8" y="3.5" width="2.6" height="3.2" fill="#e01010"/></svg><div style="position:absolute;left:1062px;top:583.5px;width:18px;height:18px;background:#eaeaea;border:1px solid #767676;box-shadow:inset 1px 1px 0 #fff"></div><svg class="a" style="left:1063px;top:584.5px" width="16" height="16" viewBox="0 0 17 17"><path d="M3.5 13.5 L13.5 3.5" stroke="#1414b8" stroke-width="1.4"/><rect x="2" y="12" width="3" height="3" fill="#e01010"/><rect x="12" y="2" width="3" height="3" fill="#e01010"/></svg><div style="position:absolute;left:1062px;top:608.55px;width:18px;height:18px;background:#eaeaea;border:1px solid #767676;box-shadow:inset 1px 1px 0 #fff"></div><svg class="a" style="left:1063px;top:609.55px" width="16" height="16" viewBox="0 0 17 17"><path d="M2 15 L15 2" stroke="#10107c" stroke-width="1.2"/><text x="0.8" y="8.6" font-size="10" fill="#d80c0c" font-family="Liberation Sans,sans-serif" font-weight="bold">A</text><text x="8.8" y="16" font-size="10" fill="#d80c0c" font-family="Liberation Sans,sans-serif" font-weight="bold">T</text></svg><div style="position:absolute;left:1062px;top:633.6px;width:18px;height:18px;background:#eaeaea;border:1px solid #767676;box-shadow:inset 1px 1px 0 #fff"></div><svg class="a" style="left:1063px;top:634.6px" width="16" height="16" viewBox="0 0 17 17"><path d="M2 3 h12.5 M5.5 5 h9 M7 7 h7.5" stroke="#d01010" stroke-width="1"/><path d="M7 9.5 h7.5 M4.5 11.7 h10 M2 14 h12.5" stroke="#1414b0" stroke-width="1"/></svg><div style="position:absolute;left:1062px;top:658.6500000000001px;width:18px;height:18px;background:#eaeaea;border:1px solid #767676;box-shadow:inset 1px 1px 0 #fff"></div><svg class="a" style="left:1063px;top:659.6500000000001px" width="16" height="16" viewBox="0 0 17 17"><text x="1" y="9" font-size="10" fill="#d80c0c" font-family="Liberation Sans,sans-serif" font-weight="bold">f/L</text><path d="M3.5 10.5 v5 M6.8 10.5 v5 M10.1 10.5 v5 M13.4 10.5 v5" stroke="#1414b0" stroke-width="1.3"/></svg><div style="position:absolute;left:1062px;top:683.7px;width:18px;height:18px;background:#eaeaea;border:1px solid #767676;box-shadow:inset 1px 1px 0 #fff"></div><svg class="a" style="left:1063px;top:684.7px" width="16" height="16" viewBox="0 0 17 17"><text x="1.5" y="9" font-size="10" fill="#d80c0c" font-family="Liberation Sans,sans-serif" font-weight="bold">f/f</text><path d="M3 12 c3 0.5 5 -0.5 7 -2 c1.5 -0.8 3.5 0 2.5 1.5 c-1.5 1.8 -4.5 0 -5.5 1.8 M3 15 c4 0 8 -0.3 12 -2.5" stroke="#1414b0" stroke-width="1.1" fill="none"/></svg><div style="position:absolute;left:1062px;top:708.75px;width:18px;height:18px;background:#eaeaea;border:1px solid #767676;box-shadow:inset 1px 1px 0 #fff"></div><svg class="a" style="left:1063px;top:709.75px" width="16" height="16" viewBox="0 0 17 17"><text x="3" y="8" font-size="9.5" fill="#d80c0c" font-family="Liberation Sans,sans-serif" font-weight="bold">f</text><circle cx="12.6" cy="5.8" r="2" fill="none" stroke="#d80c0c" stroke-width="1.2"/><path d="M1.5 15.5 C5 13 8 8 10.5 2 M15.5 15.5 C12 13 9.5 10 8.3 7.5 M5 15.5 c1 -3.5 6 -4 7.5 0" stroke="#10109c" stroke-width="1.2" fill="none"/></svg><div style="position:absolute;left:1062px;top:733.8px;width:18px;height:18px;background:#eaeaea;border:1px solid #767676;box-shadow:inset 1px 1px 0 #fff"></div><svg class="a" style="left:1063px;top:734.8px" width="16" height="16" viewBox="0 0 17 17"><text x="0.6" y="9" font-size="10" fill="#d80c0c" font-family="Liberation Sans,sans-serif" font-weight="bold">f/R</text><path d="M2 10.8 h13" stroke="#d01010" stroke-width="1.1"/><path d="M2 13 h13 M2 15.3 h13" stroke="#1414b0" stroke-width="1.2" stroke-dasharray="5 0.8"/></svg><div style="position:absolute;left:1062px;top:758.85px;width:18px;height:13px;background:#eaeaea;border:1px solid #767676;border-bottom:none;box-shadow:inset 1px 1px 0 #fff"></div><svg class="a" style="left:1062.5px;top:759.35px" width="17" height="12.5" viewBox="0 0 17 12.5"><path d="M3.5 11 L11 3.5 M9 12.5 L15.5 6 M3.5 11 l2.5 2.5 M14 11 v2.5" stroke="#1414b0" stroke-width="1.1" fill="none"/></svg><svg class="a" style="left:1074px;top:772px" width="9" height="10" viewBox="0 0 9 10"><path d="M1 1 L4.5 4.5 L8 1 M1 5 L4.5 8.5 L8 5" stroke="#111" stroke-width="1.6" fill="none"/></svg><svg class="a" style="left:203px;top:354px;background:#fff" width="854" height="409" viewBox="203 354 854 409" font-family="'Liberation Sans','Noto Sans CJK KR',sans-serif" font-size="12"><path d="M203 391.5 H969" stroke="#a8a8a8" stroke-width="1" stroke-dasharray="2 3"/><path d="M203 491.5 H969" stroke="#a8a8a8" stroke-width="1" stroke-dasharray="2 3"/><path d="M203 591.5 H969" stroke="#a8a8a8" stroke-width="1" stroke-dasharray="2 3"/><path d="M203 625.5 H969" stroke="#a8a8a8" stroke-width="1" stroke-dasharray="2 3"/><path d="M203 653.5 H969" stroke="#a8a8a8" stroke-width="1" stroke-dasharray="2 3"/><path d="M203 681.5 H969" stroke="#a8a8a8" stroke-width="1" stroke-dasharray="2 3"/><path d="M203 709.5 H969" stroke="#a8a8a8" stroke-width="1" stroke-dasharray="2 3"/><path d="M241.5 354 V737" stroke="#a8a8a8" stroke-width="1" stroke-dasharray="2 3"/><path d="M361.5 354 V737" stroke="#a8a8a8" stroke-width="1" stroke-dasharray="2 3"/><path d="M457.5 354 V737" stroke="#a8a8a8" stroke-width="1" stroke-dasharray="2 3"/><path d="M553.5 354 V737" stroke="#a8a8a8" stroke-width="1" stroke-dasharray="2 3"/><path d="M649.5 354 V737" stroke="#a8a8a8" stroke-width="1" stroke-dasharray="2 3"/><path d="M745.5 354 V737" stroke="#a8a8a8" stroke-width="1" stroke-dasharray="2 3"/><path d="M841.5 354 V737" stroke="#a8a8a8" stroke-width="1" stroke-dasharray="2 3"/><path d="M937.5 354 V737" stroke="#a8a8a8" stroke-width="1" stroke-dasharray="2 3"/><path d="M265.5 354 V737" stroke="#b8b8b8" stroke-width="1"/><rect x="206" y="730.0" width="7" height="7.0" fill="#0f7dc2" shape-rendering="crispEdges"/><rect x="214" y="722.9" width="7" height="14.1" fill="#0f7dc2" shape-rendering="crispEdges"/><rect x="222" y="711.0" width="7" height="26.0" fill="#0f7dc2" shape-rendering="crispEdges"/><rect x="230" y="722.9" width="7" height="14.1" fill="#0f7dc2" shape-rendering="crispEdges"/><rect x="238" y="724.1" width="7" height="12.9" fill="#0f7dc2" shape-rendering="crispEdges"/><rect x="246" y="718.9" width="7" height="18.1" fill="#0f7dc2" shape-rendering="crispEdges"/><rect x="254" y="722.0" width="7" height="15.0" fill="#0f7dc2" shape-rendering="crispEdges"/><rect x="262" y="677.0" width="7" height="60.0" fill="#0f7dc2" shape-rendering="crispEdges"/><rect x="270" y="698.1" width="7" height="38.9" fill="#0f7dc2" shape-rendering="crispEdges"/><rect x="278" y="696.0" width="7" height="41.0" fill="#0f7dc2" shape-rendering="crispEdges"/><rect x="286" y="628.0" width="7" height="109.0" fill="#0f7dc2" shape-rendering="crispEdges"/><rect x="294" y="679.1" width="7" height="57.9" fill="#0f7dc2" shape-rendering="crispEdges"/><rect x="302" y="660.1" width="7" height="76.9" fill="#0f7dc2" shape-rendering="crispEdges"/><rect x="310" y="692.9" width="7" height="44.1" fill="#0f7dc2" shape-rendering="crispEdges"/><rect x="318" y="714.0" width="7" height="23.0" fill="#0f7dc2" shape-rendering="crispEdges"/><rect x="326" y="713.1" width="7" height="23.9" fill="#0f7dc2" shape-rendering="crispEdges"/><rect x="334" y="694.1" width="7" height="42.9" fill="#0f7dc2" shape-rendering="crispEdges"/><rect x="342" y="711.0" width="7" height="26.0" fill="#0f7dc2" shape-rendering="crispEdges"/><rect x="350" y="710.0" width="7" height="27.0" fill="#0f7dc2" shape-rendering="crispEdges"/><rect x="358" y="700.0" width="7" height="37.0" fill="#0f7dc2" shape-rendering="crispEdges"/><rect x="366" y="708.9" width="7" height="28.1" fill="#0f7dc2" shape-rendering="crispEdges"/><rect x="374" y="698.1" width="7" height="38.9" fill="#0f7dc2" shape-rendering="crispEdges"/><rect x="382" y="686.1" width="7" height="50.9" fill="#0f7dc2" shape-rendering="crispEdges"/><rect x="390" y="695.0" width="7" height="42.0" fill="#0f7dc2" shape-rendering="crispEdges"/><rect x="398" y="722.9" width="7" height="14.1" fill="#0f7dc2" shape-rendering="crispEdges"/><rect x="406" y="710.0" width="7" height="27.0" fill="#0f7dc2" shape-rendering="crispEdges"/><rect x="414" y="711.0" width="7" height="26.0" fill="#0f7dc2" shape-rendering="crispEdges"/><rect x="422" y="699.0" width="7" height="38.0" fill="#0f7dc2" shape-rendering="crispEdges"/><rect x="430" y="711.9" width="7" height="25.1" fill="#0f7dc2" shape-rendering="crispEdges"/><rect x="438" y="707.9" width="7" height="29.1" fill="#0f7dc2" shape-rendering="crispEdges"/><rect x="446" y="684.0" width="7" height="53.0" fill="#0f7dc2" shape-rendering="crispEdges"/><rect x="454" y="704.9" width="7" height="32.1" fill="#0f7dc2" shape-rendering="crispEdges"/><rect x="462" y="715.9" width="7" height="21.1" fill="#0f7dc2" shape-rendering="crispEdges"/><rect x="470" y="719.9" width="7" height="17.1" fill="#0f7dc2" shape-rendering="crispEdges"/><rect x="478" y="718.9" width="7" height="18.1" fill="#0f7dc2" shape-rendering="crispEdges"/><rect x="486" y="714.0" width="7" height="23.0" fill="#0f7dc2" shape-rendering="crispEdges"/><rect x="494" y="721.1" width="7" height="15.9" fill="#0f7dc2" shape-rendering="crispEdges"/><rect x="502" y="724.1" width="7" height="12.9" fill="#0f7dc2" shape-rendering="crispEdges"/><rect x="510" y="722.0" width="7" height="15.0" fill="#0f7dc2" shape-rendering="crispEdges"/><rect x="518" y="726.9" width="7" height="10.1" fill="#0f7dc2" shape-rendering="crispEdges"/><rect x="526" y="718.0" width="7" height="19.0" fill="#0f7dc2" shape-rendering="crispEdges"/><rect x="534" y="718.9" width="7" height="18.1" fill="#0f7dc2" shape-rendering="crispEdges"/><rect x="542" y="726.9" width="7" height="10.1" fill="#0f7dc2" shape-rendering="crispEdges"/><rect x="550" y="721.1" width="7" height="15.9" fill="#0f7dc2" shape-rendering="crispEdges"/><rect x="558" y="729.0" width="7" height="8.0" fill="#0f7dc2" shape-rendering="crispEdges"/><rect x="566" y="721.1" width="7" height="15.9" fill="#0f7dc2" shape-rendering="crispEdges"/><rect x="574" y="721.1" width="7" height="15.9" fill="#0f7dc2" shape-rendering="crispEdges"/><rect x="582" y="726.9" width="7" height="10.1" fill="#0f7dc2" shape-rendering="crispEdges"/><rect x="590" y="717.1" width="7" height="19.9" fill="#0f7dc2" shape-rendering="crispEdges"/><rect x="598" y="725.0" width="7" height="12.0" fill="#0f7dc2" shape-rendering="crispEdges"/><rect x="606" y="726.9" width="7" height="10.1" fill="#0f7dc2" shape-rendering="crispEdges"/><rect x="614" y="726.0" width="7" height="11.0" fill="#0f7dc2" shape-rendering="crispEdges"/><rect x="622" y="726.0" width="7" height="11.0" fill="#0f7dc2" shape-rendering="crispEdges"/><rect x="630" y="726.0" width="7" height="11.0" fill="#0f7dc2" shape-rendering="crispEdges"/><rect x="638" y="722.9" width="7" height="14.1" fill="#0f7dc2" shape-rendering="crispEdges"/><rect x="646" y="726.0" width="7" height="11.0" fill="#0f7dc2" shape-rendering="crispEdges"/><rect x="654" y="726.0" width="7" height="11.0" fill="#0f7dc2" shape-rendering="crispEdges"/><rect x="662" y="726.9" width="7" height="10.1" fill="#0f7dc2" shape-rendering="crispEdges"/><rect x="670" y="722.0" width="7" height="15.0" fill="#0f7dc2" shape-rendering="crispEdges"/><rect x="678" y="722.9" width="7" height="14.1" fill="#0f7dc2" shape-rendering="crispEdges"/><rect x="686" y="726.0" width="7" height="11.0" fill="#0f7dc2" shape-rendering="crispEdges"/><rect x="694" y="725.0" width="7" height="12.0" fill="#0f7dc2" shape-rendering="crispEdges"/><rect x="702" y="728.1" width="7" height="8.9" fill="#0f7dc2" shape-rendering="crispEdges"/><rect x="710" y="726.9" width="7" height="10.1" fill="#0f7dc2" shape-rendering="crispEdges"/><rect x="718" y="729.0" width="7" height="8.0" fill="#0f7dc2" shape-rendering="crispEdges"/><rect x="726" y="726.9" width="7" height="10.1" fill="#0f7dc2" shape-rendering="crispEdges"/><rect x="734" y="726.0" width="7" height="11.0" fill="#0f7dc2" shape-rendering="crispEdges"/><rect x="742" y="722.0" width="7" height="15.0" fill="#0f7dc2" shape-rendering="crispEdges"/><rect x="750" y="726.0" width="7" height="11.0" fill="#0f7dc2" shape-rendering="crispEdges"/><rect x="758" y="722.0" width="7" height="15.0" fill="#0f7dc2" shape-rendering="crispEdges"/><rect x="766" y="702.1" width="7" height="34.9" fill="#0f7dc2" shape-rendering="crispEdges"/><rect x="774" y="721.1" width="7" height="15.9" fill="#0f7dc2" shape-rendering="crispEdges"/><rect x="782" y="726.0" width="7" height="11.0" fill="#0f7dc2" shape-rendering="crispEdges"/><rect x="790" y="715.0" width="7" height="22.0" fill="#0f7dc2" shape-rendering="crispEdges"/><rect x="798" y="718.0" width="7" height="19.0" fill="#0f7dc2" shape-rendering="crispEdges"/><rect x="806" y="721.1" width="7" height="15.9" fill="#0f7dc2" shape-rendering="crispEdges"/><rect x="814" y="722.0" width="7" height="15.0" fill="#0f7dc2" shape-rendering="crispEdges"/><rect x="822" y="725.0" width="7" height="12.0" fill="#0f7dc2" shape-rendering="crispEdges"/><rect x="830" y="718.9" width="7" height="18.1" fill="#0f7dc2" shape-rendering="crispEdges"/><rect x="838" y="722.0" width="7" height="15.0" fill="#0f7dc2" shape-rendering="crispEdges"/><rect x="846" y="725.0" width="7" height="12.0" fill="#0f7dc2" shape-rendering="crispEdges"/><rect x="854" y="721.1" width="7" height="15.9" fill="#0f7dc2" shape-rendering="crispEdges"/><rect x="862" y="724.1" width="7" height="12.9" fill="#0f7dc2" shape-rendering="crispEdges"/><rect x="870" y="708.9" width="7" height="28.1" fill="#0f7dc2" shape-rendering="crispEdges"/><rect x="878" y="715.0" width="7" height="22.0" fill="#0f7dc2" shape-rendering="crispEdges"/><rect x="886" y="707.9" width="7" height="29.1" fill="#0f7dc2" shape-rendering="crispEdges"/><rect x="894" y="700.0" width="7" height="37.0" fill="#0f7dc2" shape-rendering="crispEdges"/><rect x="902" y="700.0" width="7" height="37.0" fill="#0f7dc2" shape-rendering="crispEdges"/><rect x="910" y="681.9" width="7" height="55.1" fill="#0f7dc2" shape-rendering="crispEdges"/><rect x="918" y="696.0" width="7" height="41.0" fill="#0f7dc2" shape-rendering="crispEdges"/><path d="M203 592.2 L237 590.6 L257 590 L290 582 L300 579.5 L500 470 L800 410 L907 408 L921 409.6" stroke="#15781f" stroke-width="1.05" fill="none" stroke-linejoin="round" transform="translate(-0.5 0)"/><path d="M203 586 L225 586.5 L250 587.5 L258 586 L264 582 L290 566 L500 430 L800 405 L907 416.6 L921 420.5" stroke="#15158c" stroke-width="1.05" fill="none" stroke-linejoin="round" transform="translate(-0.5 0)"/><path d="M203 584.5 L215 583.5 L240 585.5 L252 587 L262 582.5 L270 575 L300 555 L500 420 L800 400 L907 425 L919 436" stroke="#c01818" stroke-width="1.05" fill="none" stroke-linejoin="round" transform="translate(-0.5 0)"/><g shape-rendering="crispEdges"><path d="M209.5 581 V586" stroke="#a81010" stroke-width="1"/><rect x="206" y="582" width="7" height="4" fill="#e40808"/><path d="M217.5 582 V586" stroke="#a81010" stroke-width="1"/><rect x="214" y="582" width="7" height="4" fill="#e40808"/><path d="M225.5 582 V587" stroke="#08088c" stroke-width="1"/><rect x="222" y="583" width="7" height="3" fill="#0808dc"/><path d="M233.5 583 V588" stroke="#08088c" stroke-width="1"/><rect x="230" y="584" width="7" height="3" fill="#0808dc"/><path d="M241.5 584 V588" stroke="#a81010" stroke-width="1"/><rect x="238" y="585" width="7" height="3" fill="#e40808"/><path d="M249.5 584 V588" stroke="#08088c" stroke-width="1"/><rect x="246" y="585" width="7" height="3" fill="#0808dc"/><path d="M257.5 580 V588" stroke="#08088c" stroke-width="1"/><rect x="254" y="583" width="7" height="4" fill="#0808dc"/><path d="M265.5 556 V567" stroke="#a81010" stroke-width="1"/><rect x="262" y="558" width="7" height="6" fill="#e40808"/><path d="M273.5 554 V558" stroke="#08088c" stroke-width="1"/><rect x="270" y="555" width="7" height="2" fill="#0808dc"/><path d="M281.5 555 V564" stroke="#08088c" stroke-width="1"/><rect x="278" y="557" width="7" height="5" fill="#0808dc"/><path d="M289.5 549 V561" stroke="#08088c" stroke-width="1"/><rect x="286" y="551" width="7" height="7" fill="#0808dc"/><path d="M297.5 547 V553" stroke="#08088c" stroke-width="1"/><rect x="294" y="549" width="7" height="3" fill="#0808dc"/><path d="M305.5 540 V554" stroke="#a81010" stroke-width="1"/><rect x="302" y="543" width="7" height="8" fill="#e40808"/><path d="M313.5 538 V551" stroke="#a81010" stroke-width="1"/><rect x="310" y="541" width="7" height="8" fill="#e40808"/><path d="M321.5 539 V548" stroke="#a81010" stroke-width="1"/><rect x="318" y="539" width="7" height="8" fill="#e40808"/><path d="M329.5 536 V544" stroke="#08088c" stroke-width="1"/><rect x="326" y="537" width="7" height="5" fill="#0808dc"/><path d="M337.5 528 V539" stroke="#08088c" stroke-width="1"/><rect x="334" y="531" width="7" height="4" fill="#0808dc"/><path d="M345.5 523 V538" stroke="#08088c" stroke-width="1"/><rect x="342" y="527" width="7" height="8" fill="#0808dc"/><path d="M353.5 516 V529" stroke="#08088c" stroke-width="1"/><rect x="350" y="519" width="7" height="8" fill="#0808dc"/><path d="M361.5 514 V520" stroke="#08088c" stroke-width="1"/><rect x="358" y="516" width="7" height="3" fill="#0808dc"/><path d="M369.5 508 V519" stroke="#08088c" stroke-width="1"/><rect x="366" y="508" width="7" height="8" fill="#0808dc"/><path d="M377.5 501 V510" stroke="#a81010" stroke-width="1"/><rect x="374" y="504" width="7" height="3" fill="#e40808"/><path d="M385.5 494 V504" stroke="#a81010" stroke-width="1"/><rect x="382" y="497" width="7" height="6" fill="#e40808"/><path d="M393.5 492 V506" stroke="#08088c" stroke-width="1"/><rect x="390" y="496" width="7" height="8" fill="#0808dc"/><path d="M401.5 488 V496" stroke="#a81010" stroke-width="1"/><rect x="398" y="489" width="7" height="6" fill="#e40808"/><path d="M409.5 482 V490" stroke="#a81010" stroke-width="1"/><rect x="406" y="485" width="7" height="3" fill="#e40808"/><path d="M417.5 482 V494" stroke="#a81010" stroke-width="1"/><rect x="414" y="484" width="7" height="8" fill="#e40808"/><path d="M425.5 477 V489" stroke="#08088c" stroke-width="1"/><rect x="422" y="480" width="7" height="6" fill="#0808dc"/><path d="M433.5 473 V480" stroke="#08088c" stroke-width="1"/><rect x="430" y="474" width="7" height="5" fill="#0808dc"/><path d="M441.5 472 V479" stroke="#08088c" stroke-width="1"/><rect x="438" y="472" width="7" height="6" fill="#0808dc"/><path d="M449.5 464 V469" stroke="#08088c" stroke-width="1"/><rect x="446" y="467" width="7" height="2" fill="#0808dc"/><path d="M457.5 460 V470" stroke="#08088c" stroke-width="1"/><rect x="454" y="462" width="7" height="5" fill="#0808dc"/><path d="M465.5 455 V464" stroke="#a81010" stroke-width="1"/><rect x="462" y="458" width="7" height="2" fill="#e40808"/><path d="M473.5 449 V457" stroke="#08088c" stroke-width="1"/><rect x="470" y="450" width="7" height="6" fill="#0808dc"/><path d="M481.5 443 V450" stroke="#08088c" stroke-width="1"/><rect x="478" y="444" width="7" height="5" fill="#0808dc"/><path d="M489.5 438 V445" stroke="#08088c" stroke-width="1"/><rect x="486" y="441" width="7" height="3" fill="#0808dc"/><path d="M497.5 434 V444" stroke="#a81010" stroke-width="1"/><rect x="494" y="435" width="7" height="7" fill="#e40808"/><path d="M505.5 430 V437" stroke="#a81010" stroke-width="1"/><rect x="502" y="431" width="7" height="3" fill="#e40808"/><path d="M513.5 425 V437" stroke="#a81010" stroke-width="1"/><rect x="510" y="426" width="7" height="8" fill="#e40808"/><path d="M521.5 423 V431" stroke="#a81010" stroke-width="1"/><rect x="518" y="424" width="7" height="5" fill="#e40808"/><path d="M529.5 416 V425" stroke="#08088c" stroke-width="1"/><rect x="526" y="416" width="7" height="8" fill="#0808dc"/><path d="M537.5 412 V421" stroke="#08088c" stroke-width="1"/><rect x="534" y="414" width="7" height="6" fill="#0808dc"/><path d="M545.5 406 V416" stroke="#a81010" stroke-width="1"/><rect x="542" y="407" width="7" height="8" fill="#e40808"/><path d="M553.5 401 V407" stroke="#08088c" stroke-width="1"/><rect x="550" y="402" width="7" height="5" fill="#0808dc"/><path d="M561.5 399 V413" stroke="#08088c" stroke-width="1"/><rect x="558" y="401" width="7" height="8" fill="#0808dc"/><path d="M569.5 397 V407" stroke="#08088c" stroke-width="1"/><rect x="566" y="400" width="7" height="4" fill="#0808dc"/><path d="M577.5 396 V402" stroke="#a81010" stroke-width="1"/><rect x="574" y="397" width="7" height="4" fill="#e40808"/><path d="M585.5 396 V403" stroke="#08088c" stroke-width="1"/><rect x="582" y="396" width="7" height="4" fill="#0808dc"/><path d="M593.5 392 V406" stroke="#08088c" stroke-width="1"/><rect x="590" y="395" width="7" height="9" fill="#0808dc"/><path d="M601.5 389 V401" stroke="#a81010" stroke-width="1"/><rect x="598" y="391" width="7" height="7" fill="#e40808"/><path d="M609.5 388 V397" stroke="#08088c" stroke-width="1"/><rect x="606" y="391" width="7" height="5" fill="#0808dc"/><path d="M617.5 386 V398" stroke="#a81010" stroke-width="1"/><rect x="614" y="389" width="7" height="8" fill="#e40808"/><path d="M625.5 387 V396" stroke="#08088c" stroke-width="1"/><rect x="622" y="387" width="7" height="6" fill="#0808dc"/><path d="M633.5 391 V401" stroke="#08088c" stroke-width="1"/><rect x="630" y="391" width="7" height="7" fill="#0808dc"/><path d="M641.5 392 V397" stroke="#a81010" stroke-width="1"/><rect x="638" y="393" width="7" height="2" fill="#e40808"/><path d="M649.5 391 V397" stroke="#08088c" stroke-width="1"/><rect x="646" y="391" width="7" height="6" fill="#0808dc"/><path d="M657.5 385 V395" stroke="#a81010" stroke-width="1"/><rect x="654" y="389" width="7" height="3" fill="#e40808"/><path d="M665.5 386 V395" stroke="#a81010" stroke-width="1"/><rect x="662" y="388" width="7" height="5" fill="#e40808"/><path d="M673.5 390 V398" stroke="#a81010" stroke-width="1"/><rect x="670" y="390" width="7" height="6" fill="#e40808"/><path d="M681.5 388 V396" stroke="#08088c" stroke-width="1"/><rect x="678" y="390" width="7" height="5" fill="#0808dc"/><path d="M689.5 386 V396" stroke="#08088c" stroke-width="1"/><rect x="686" y="390" width="7" height="4" fill="#0808dc"/><path d="M697.5 392 V402" stroke="#a81010" stroke-width="1"/><rect x="694" y="394" width="7" height="6" fill="#e40808"/><path d="M705.5 395 V402" stroke="#08088c" stroke-width="1"/><rect x="702" y="396" width="7" height="5" fill="#0808dc"/><path d="M713.5 396 V406" stroke="#a81010" stroke-width="1"/><rect x="710" y="398" width="7" height="7" fill="#e40808"/><path d="M721.5 397 V413" stroke="#a81010" stroke-width="1"/><rect x="718" y="401" width="7" height="9" fill="#e40808"/><path d="M729.5 397 V408" stroke="#a81010" stroke-width="1"/><rect x="726" y="400" width="7" height="5" fill="#e40808"/><path d="M737.5 401 V413" stroke="#08088c" stroke-width="1"/><rect x="734" y="404" width="7" height="7" fill="#0808dc"/><path d="M745.5 401 V411" stroke="#a81010" stroke-width="1"/><rect x="742" y="402" width="7" height="6" fill="#e40808"/><path d="M753.5 397 V404" stroke="#a81010" stroke-width="1"/><rect x="750" y="400" width="7" height="3" fill="#e40808"/><path d="M761.5 396 V410" stroke="#a81010" stroke-width="1"/><rect x="758" y="400" width="7" height="7" fill="#e40808"/><path d="M769.5 401 V413" stroke="#08088c" stroke-width="1"/><rect x="766" y="404" width="7" height="9" fill="#0808dc"/><path d="M777.5 407 V416" stroke="#08088c" stroke-width="1"/><rect x="774" y="408" width="7" height="5" fill="#0808dc"/><path d="M785.5 409 V417" stroke="#a81010" stroke-width="1"/><rect x="782" y="411" width="7" height="3" fill="#e40808"/><path d="M793.5 408 V416" stroke="#a81010" stroke-width="1"/><rect x="790" y="410" width="7" height="3" fill="#e40808"/><path d="M801.5 409 V417" stroke="#a81010" stroke-width="1"/><rect x="798" y="411" width="7" height="4" fill="#e40808"/><path d="M809.5 408 V418" stroke="#08088c" stroke-width="1"/><rect x="806" y="409" width="7" height="6" fill="#0808dc"/><path d="M817.5 407 V418" stroke="#08088c" stroke-width="1"/><rect x="814" y="409" width="7" height="7" fill="#0808dc"/><path d="M825.5 411 V419" stroke="#08088c" stroke-width="1"/><rect x="822" y="412" width="7" height="6" fill="#0808dc"/><path d="M833.5 414 V427" stroke="#08088c" stroke-width="1"/><rect x="830" y="415" width="7" height="9" fill="#0808dc"/><path d="M841.5 413 V420" stroke="#a81010" stroke-width="1"/><rect x="838" y="415" width="7" height="4" fill="#e40808"/><path d="M849.5 414 V425" stroke="#08088c" stroke-width="1"/><rect x="846" y="415" width="7" height="7" fill="#0808dc"/><path d="M857.5 416 V426" stroke="#08088c" stroke-width="1"/><rect x="854" y="417" width="7" height="8" fill="#0808dc"/><path d="M865.5 415 V423" stroke="#a81010" stroke-width="1"/><rect x="862" y="416" width="7" height="5" fill="#e40808"/><path d="M873.5 414 V427" stroke="#a81010" stroke-width="1"/><rect x="870" y="418" width="7" height="7" fill="#e40808"/><path d="M881.5 418 V428" stroke="#08088c" stroke-width="1"/><rect x="878" y="421" width="7" height="5" fill="#0808dc"/><path d="M889.5 421 V433" stroke="#08088c" stroke-width="1"/><rect x="886" y="423" width="7" height="7" fill="#0808dc"/><path d="M897.5 426 V435" stroke="#a81010" stroke-width="1"/><rect x="894" y="427" width="7" height="6" fill="#e40808"/><path d="M905.5 428 V439" stroke="#08088c" stroke-width="1"/><rect x="902" y="429" width="7" height="9" fill="#0808dc"/><path d="M905.5 426 V445" stroke="#08088c" stroke-width="1"/><rect x="902" y="431" width="7" height="11" fill="#0808dc"/><path d="M913.5 436 V454" stroke="#08088c" stroke-width="1"/><rect x="910" y="443" width="7" height="7" fill="#0808dc"/></g><path d="M919 439.5 h6" stroke="#e01818" stroke-width="1.2"/><path d="M203 354.5 H1057" stroke="#000" stroke-width="1.2"/><path d="M203 609.5 H969" stroke="#000" stroke-width="1.15"/><path d="M203 737.5 H970" stroke="#000" stroke-width="1.15"/><path d="M969 354 V738" stroke="#000" stroke-width="1.6"/><path d="M969 391.5 h5.5" stroke="#000" stroke-width="1.15"/><path d="M969 441.5 h3.5" stroke="#000" stroke-width="1.15"/><path d="M969 491.5 h5.5" stroke="#000" stroke-width="1.15"/><path d="M969 541.5 h3.5" stroke="#000" stroke-width="1.15"/><path d="M969 591.5 h5.5" stroke="#000" stroke-width="1.15"/><path d="M969 625.5 h5.5" stroke="#000" stroke-width="1.15"/><path d="M969 653.5 h5.5" stroke="#000" stroke-width="1.15"/><path d="M969 681.5 h5.5" stroke="#000" stroke-width="1.15"/><path d="M969 709.5 h5.5" stroke="#000" stroke-width="1.15"/><text x="977.8" y="395.5" fill="#111" font-size="12.5">500.00</text><text x="977.8" y="495.5" fill="#111" font-size="12.5">490.00</text><text x="977.8" y="595.5" fill="#111" font-size="12.5">480.00</text><text x="977.8" y="629.5" fill="#111" font-size="12.5">20000</text><text x="977.8" y="657.5" fill="#111" font-size="12.5">15000</text><text x="977.8" y="685.5" fill="#111" font-size="12.5">10000</text><text x="977.8" y="713.5" fill="#111" font-size="12.5">5000</text><path d="M241.5 737 v6" stroke="#000" stroke-width="1.1"/><path d="M265.5 737 v6" stroke="#000" stroke-width="1.1"/><path d="M361.5 737 v6" stroke="#000" stroke-width="1.1"/><path d="M457.5 737 v6" stroke="#000" stroke-width="1.1"/><path d="M553.5 737 v6" stroke="#000" stroke-width="1.1"/><path d="M649.5 737 v6" stroke="#000" stroke-width="1.1"/><path d="M745.5 737 v6" stroke="#000" stroke-width="1.1"/><path d="M841.5 737 v6" stroke="#000" stroke-width="1.1"/><path d="M937.5 737 v6" stroke="#000" stroke-width="1.1"/><text x="266" y="757" text-anchor="middle" fill="#222" font-size="12" font-weight="bold">10/02</text><text x="362" y="757" text-anchor="middle" fill="#222" font-size="12">09:50</text><text x="458" y="757" text-anchor="middle" fill="#222" font-size="12">10:50</text><text x="554" y="757" text-anchor="middle" fill="#222" font-size="12">11:50</text><text x="650" y="757" text-anchor="middle" fill="#222" font-size="12">12:50</text><text x="746" y="757" text-anchor="middle" fill="#222" font-size="12">13:50</text><text x="842" y="757" text-anchor="middle" fill="#222" font-size="12">14:50</text><rect x="968.5" y="744.5" width="14" height="14" fill="#fff" stroke="#333" stroke-width="1"/><circle cx="974" cy="749.5" r="2.6" fill="none" stroke="#111" stroke-width="1.5"/><path d="M976 751.5 l3.8 3.8" stroke="#111" stroke-width="1.8"/><rect x="957.5" y="356.5" width="8" height="8" fill="#fff" stroke="#333" stroke-width="1"/><rect x="959.7" y="358.7" width="3.6" height="3.6" fill="none" stroke="#111" stroke-width="1.5"/><rect x="947.5" y="611.5" width="8" height="8" fill="#fff" stroke="#333" stroke-width="1"/><path d="M949 615.5 h5" stroke="#111" stroke-width="1.2"/><rect x="957.5" y="611.5" width="8" height="8" fill="#fff" stroke="#333" stroke-width="1"/><path d="M959 613 l5 5 M964 613 l-5 5" stroke="#111" stroke-width="1.1"/><text x="203" y="368.5" font-size="12.5" fill="#111">KOSPI200 선물 단순이동평균3 (5,20,60) 2025/10/02 10:10</text><text x="560" y="368.5" font-size="12.5" fill="#d8262c" textLength="37" lengthAdjust="spacingAndGlyphs">494.10</text><text x="602" y="368.5" font-size="12.5" fill="#2a2ac0" textLength="37" lengthAdjust="spacingAndGlyphs">495.02</text><text x="644" y="368.5" font-size="12.5" fill="#1f8a2e" textLength="37" lengthAdjust="spacingAndGlyphs">493.77</text><text x="854" y="380.5" font-size="12.5" fill="#d8262c" textLength="55.5" lengthAdjust="spacingAndGlyphs">H: -0.22%</text><text x="919.5" y="380.5" font-size="12.5" fill="#2a2ac0" textLength="46.5" lengthAdjust="spacingAndGlyphs">L: 3.08%</text><path d="M249.5 590.5 h15 M249.5 590.5 l3.5 2.5" stroke="#2a2ac0" stroke-width="1" fill="none"/><text x="269.6" y="594" font-size="12.5" fill="#3434a8" textLength="116.5" lengthAdjust="spacingAndGlyphs">480.35 (10/01 15:35)</text><text x="202.8" y="623" font-size="12.5" fill="#111" textLength="34.6" lengthAdjust="spacingAndGlyphs">거래량</text><text x="248" y="623" font-size="12.5" fill="#111" textLength="64.4" lengthAdjust="spacingAndGlyphs">2025/10/02</text><text x="318.7" y="623" font-size="12.5" fill="#111" textLength="28.7" lengthAdjust="spacingAndGlyphs">10:10</text><text x="352.7" y="623" font-size="12.5" fill="#1f86c8" textLength="30" lengthAdjust="spacingAndGlyphs">7,304</text><text x="1020.5" y="756" font-size="12.5" fill="#222" textLength="30" lengthAdjust="spacingAndGlyphs" text-anchor="middle">15:50</text></svg><div style="position:absolute;left:202px;top:762px;width:855px;height:20px;background:#c0c0c0"></div><div style="position:absolute;left:202px;top:762px;width:17px;height:20px;background:#b2b2b2"></div><svg class="a" style="left:207px;top:768px" width="4" height="7"><path d="M4 0 L4 7 L0 3.5Z" fill="#000"/></svg><svg class="a" style="left:0;top:0" width="1109" height="848"><g fill="#575757" shape-rendering="crispEdges"><rect x="219" y="781" width="11" height="1"/><rect x="230" y="781" width="8" height="1"/><rect x="238" y="781" width="5" height="1"/><rect x="243" y="781" width="3" height="1"/><rect x="246" y="782" width="16" height="0"/><rect x="262" y="781" width="16" height="1"/><rect x="278" y="781" width="8" height="1"/><rect x="286" y="780" width="16" height="2"/><rect x="302" y="780" width="3" height="2"/><rect x="305" y="781" width="11" height="1"/><rect x="316" y="780" width="11" height="2"/><rect x="327" y="781" width="11" height="1"/><rect x="338" y="781" width="5" height="1"/><rect x="343" y="781" width="3" height="1"/><rect x="346" y="781" width="5" height="1"/><rect x="351" y="781" width="16" height="1"/><rect x="367" y="780" width="11" height="2"/><rect x="378" y="781" width="3" height="1"/><rect x="381" y="780" width="5" height="2"/><rect x="386" y="780" width="5" height="2"/><rect x="391" y="781" width="11" height="1"/><rect x="402" y="781" width="8" height="1"/><rect x="410" y="781" width="11" height="1"/><rect x="421" y="781" width="8" height="1"/><rect x="429" y="780" width="5" height="2"/><rect x="434" y="782" width="3" height="0"/><rect x="437" y="782" width="3" height="0"/><rect x="440" y="781" width="11" height="1"/><rect x="451" y="781" width="3" height="1"/><rect x="454" y="780" width="11" height="2"/><rect x="465" y="781" width="3" height="1"/><rect x="468" y="781" width="3" height="1"/><rect x="471" y="781" width="16" height="1"/><rect x="487" y="781" width="5" height="1"/><rect x="492" y="778" width="3" height="4"/><rect x="495" y="777" width="5" height="5"/><rect x="500" y="777" width="3" height="5"/><rect x="503" y="777" width="3" height="5"/><rect x="506" y="777" width="11" height="5"/><rect x="517" y="778" width="5" height="4"/><rect x="522" y="778" width="3" height="4"/><rect x="525" y="778" width="5" height="4"/><rect x="530" y="778" width="16" height="4"/><rect x="546" y="777" width="5" height="5"/><rect x="551" y="778" width="3" height="4"/><rect x="554" y="777" width="8" height="5"/><rect x="562" y="778" width="16" height="4"/><rect x="578" y="777" width="8" height="5"/><rect x="586" y="778" width="3" height="4"/><rect x="589" y="778" width="11" height="4"/><rect x="600" y="777" width="5" height="5"/><rect x="605" y="778" width="16" height="4"/><rect x="621" y="776" width="8" height="6"/><rect x="629" y="776" width="16" height="6"/><rect x="645" y="776" width="3" height="6"/><rect x="648" y="776" width="1" height="6"/></g></svg><div style="position:absolute;left:649px;top:762px;width:193px;height:20px;background:#717171"></div><svg class="a" style="left:0;top:0" width="1109" height="848"><path d="M660 782 L661 771 C665 767 683 765.5 705 764 Q759 762.8 824 763.8 Q829 764.5 829 770 V782Z" fill="#2d2d2d"/></svg><div style="position:absolute;left:649px;top:763px;width:4px;height:19px;background:#fff"></div><div style="position:absolute;left:650.2px;top:765px;width:1.6px;height:15px;background:#111"></div><div style="position:absolute;left:838px;top:763px;width:4px;height:19px;background:#fff"></div><div style="position:absolute;left:839.2px;top:765px;width:1.6px;height:15px;background:#111"></div><div style="position:absolute;left:843.0px;top:762px;width:16.5px;height:20px;background:#b4b4b4;border-left:1px solid #cfcfcf;border-right:1px solid #8e8e8e"></div><svg class="a" style="left:849.0px;top:768.5px" width="4.5" height="7.5"><path d="M0 0 L4.5 3.75 L0 7.5Z" fill="#000"/></svg><div style="position:absolute;left:860.2px;top:762px;width:16.5px;height:20px;background:#b4b4b4;border-left:1px solid #cfcfcf;border-right:1px solid #8e8e8e"></div><svg class="a" style="left:864.2px;top:768.5px" width="8.5" height="7.5"><path d="M4.25 0 L0 3.75 L4.25 7.5Z M8.5 0 L4.25 3.75 L8.5 7.5Z" fill="#000"/></svg><div style="position:absolute;left:877.4px;top:762px;width:16.5px;height:20px;background:#b4b4b4;border-left:1px solid #cfcfcf;border-right:1px solid #8e8e8e"></div><svg class="a" style="left:881.4px;top:768.5px" width="8.5" height="7.5"><path d="M0 0 L4.25 3.75 L0 7.5Z M4.25 0 L8.5 3.75 L4.25 7.5Z" fill="#000"/></svg><div style="position:absolute;left:896px;top:763px;width:52px;height:18px;background:#fff;border:1px solid #8e8e8e;border-right-color:#ddd;border-bottom-color:#ddd"></div><div class="t" style="left:896px;width:48px;text-align:right;top:766px;font-family:'Liberation Sans','Noto Sans CJK KR',sans-serif;font-size:12.5px">95</div><div style="position:absolute;left:949px;top:762px;width:108px;height:20px;background:#a9a9a9"></div><svg class="a" style="left:951px;top:766px" width="106" height="13" viewBox="0 0 106 13"><path d="M5.5 0.5 L0.5 6.5 L5.5 12.5Z M7.5 0.5 L12.5 6.5 L7.5 12.5Z" fill="#000"/><path d="M18.5 0.5 L24.5 6.5 L18.5 12.5Z M30.5 0.5 L24.5 6.5 L30.5 12.5Z" fill="#000"/><circle cx="43" cy="6.5" r="5" fill="#fff" stroke="#000" stroke-width="1.3"/><path d="M39.5 6.5 h7 M43 3 v7" stroke="#000" stroke-width="1.3"/><circle cx="61" cy="6.5" r="5" fill="#b8b8b8" stroke="#d2d2d2" stroke-width="1.3"/><path d="M57.5 6.5 h7" stroke="#d2d2d2" stroke-width="1.3"/><rect x="74.5" y="1.5" width="10" height="10" fill="#b8b8b8" stroke="#d2d2d2" stroke-width="1.2"/><path d="M76 10 L83 3 M76 3 h3 M83 10 h-3" stroke="#d2d2d2" stroke-width="1.2"/><rect x="91.5" y="1.5" width="10" height="10" fill="#fff" stroke="#000" stroke-width="1.2"/><path d="M91.5 1.5 L101.5 11.5 M101.5 1.5 L91.5 11.5" stroke="#000" stroke-width="1.1"/></svg><div style="position:absolute;left:202px;top:782px;width:882px;height:1px;background:#9a9a9a"></div><div style="position:absolute;left:202px;top:329px;width:1px;height:454px;background:#8f8f8f"></div><div style="position:absolute;left:23px;top:99px;width:884px;height:483px;background:#fff;border-right:1px solid #2a2a2a;border-bottom:1px solid #2a2a2a"></div><div style="position:absolute;left:26px;top:101px;width:877px;height:21.5px;background:linear-gradient(#9e9e9e,#8d8d8d 35%,#828282 70%,#787878)"></div><div class="t" style="left:28px;top:105px;font-family:'Liberation Sans','Noto Sans CJK KR',sans-serif;font-size:13px;color:#4a4a4a">[6100] 차트</div><div class="t" style="left:842px;top:105px;font-family:'Liberation Sans','Noto Sans CJK KR',sans-serif;font-size:11px;font-weight:bold;color:#ececec">?</div><div style="position:absolute;left:857px;top:112px;width:8px;height:3px;background:#efefef"></div><div style="position:absolute;left:873px;top:108px;width:8px;height:7px;border:1.5px solid #efefef;border-top-width:2px"></div><svg class="a" style="left:889px;top:108px" width="8" height="8" viewBox="0 0 8 8"><path d="M0.7 0.7 L7.3 7.3 M7.3 0.7 L0.7 7.3" stroke="#f2f2f2" stroke-width="1.5"/></svg><div style="position:absolute;left:27px;top:125px;width:848px;height:25px;background:#a9a9a9"></div><div style="position:absolute;left:27px;top:124px;width:875px;height:1px;background:#c9c9c9"></div><div style="position:absolute;left:29px;top:129px;width:8px;height:18px;background:linear-gradient(90deg,#fbfbfb,#cfcfcf);border:1px solid #8b8b8b;border-radius:2px"></div><svg class="a" style="left:31px;top:134px" width="4" height="7"><path d="M4 0 L4 7 L0 3.5Z" fill="#333"/></svg><div style="position:absolute;left:40px;top:128px;width:1px;height:20px;background:#7d7d7d"></div><div style="position:absolute;left:41px;top:128px;width:1px;height:20px;background:#d8d8d8"></div><div style="position:absolute;left:45px;top:127.5px;width:188px;height:20.5px;background:#fff;border:1px solid #8a8a8a;border-right-color:#dcdcdc;border-bottom-color:#e6e6e6"></div><div class="t" style="left:48.5px;top:130.5px;font-family:'Liberation Sans','Noto Sans CJK KR',sans-serif;font-size:14px;transform:scaleX(0.78);transform-origin:0 0">005930</div><svg class="a" style="left:218px;top:136px" width="8" height="5"><path d="M0 0 L8 0 L4 4.5Z" fill="#111"/></svg><div class="cb" style="left:235px;top:128.5px;width:19px;height:19.5px;"><svg width="17" height="17" viewBox="0 0 17 17"><circle cx="7" cy="6.5" r="3" fill="none" stroke="#111" stroke-width="1.8"/><path d="M9.3 8.8 L13.2 12.7" stroke="#111" stroke-width="2.2"/></svg></div><div class="cb" style="left:257px;top:128.5px;width:20px;height:19.5px;"><svg width="18" height="17" viewBox="0 0 18 17"><circle cx="7" cy="6.5" r="4.5" fill="#e4e4e4" stroke="#777" stroke-width="1.3"/><path d="M10 10 L15 15" stroke="#666" stroke-width="2"/><path d="M9 10.5 L13 7 L12.8 9.3 L17 9 L16.5 12 L13 11.6 L13.5 14Z" fill="#e01010"/></svg></div><div style="position:absolute;left:281px;top:128px;width:1px;height:20px;background:#7d7d7d"></div><div style="position:absolute;left:282px;top:128px;width:1px;height:20px;background:#d8d8d8"></div><div class="cb" style="left:286px;top:128.5px;width:18.5px;height:19.5px;font-family:'Liberation Sans','Noto Sans CJK KR',sans-serif;font-size:13px;line-height:17px;text-align:center">일</div><div class="cb" style="left:308px;top:128.5px;width:18.5px;height:19.5px;font-family:'Liberation Sans','Noto Sans CJK KR',sans-serif;font-size:13px;line-height:17px;text-align:center">주</div><div class="cb" style="left:330px;top:128.5px;width:18.5px;height:19.5px;font-family:'Liberation Sans','Noto Sans CJK KR',sans-serif;font-size:13px;line-height:17px;text-align:center">월</div><div class="cb" style="left:352px;top:128.5px;width:18.5px;height:19.5px;background:linear-gradient(#ffd9d9,#ffb4b4);border-color:#f0b0b0;font-family:'Liberation Sans','Noto Sans CJK KR',sans-serif;font-size:13px;line-height:17px;text-align:center">분</div><div style="position:absolute;left:372px;top:127.5px;width:44px;height:20.5px;background:#fff;border:1px solid #8a8a8a;border-right-color:#dcdcdc;border-bottom-color:#e6e6e6"></div><div class="t" style="left:375.5px;top:130.5px;font-family:'Liberation Sans','Noto Sans CJK KR',sans-serif;font-size:14px;transform:scaleX(0.78);transform-origin:0 0">5</div><svg class="a" style="left:404px;top:136px" width="8" height="5"><path d="M0 0 L8 0 L4 4.5Z" fill="#111"/></svg><div class="cb" style="left:419.5px;top:128.5px;width:19px;height:19.5px;font-family:'Liberation Sans','Noto Sans CJK KR',sans-serif;font-size:13px;line-height:17px;text-align:center">틱</div><div style="position:absolute;left:441px;top:127.5px;width:54px;height:20.5px;background:#fff;border:1px solid #8a8a8a;border-right-color:#dcdcdc;border-bottom-color:#e6e6e6"></div><div class="t" style="left:444.5px;top:130.5px;font-family:'Liberation Sans','Noto Sans CJK KR',sans-serif;font-size:14px;transform:scaleX(0.78);transform-origin:0 0">10</div><svg class="a" style="left:481px;top:136px" width="8" height="5"><path d="M0 0 L8 0 L4 4.5Z" fill="#111"/></svg><div style="position:absolute;left:499px;top:128px;width:1px;height:20px;background:#7d7d7d"></div><div style="position:absolute;left:500px;top:128px;width:1px;height:20px;background:#d8d8d8"></div><div style="position:absolute;left:503px;top:127.5px;width:50px;height:20.5px;background:#fff;border:1px solid #8a8a8a;border-right-color:#dcdcdc;border-bottom-color:#e6e6e6"></div><div class="t" style="left:507px;top:131.5px;font-family:'Liberation Sans','Noto Sans CJK KR',sans-serif;font-size:12.5px">건수</div><svg class="a" style="left:539px;top:136px" width="8" height="5"><path d="M0 0 L8 0 L4 4.5Z" fill="#111"/></svg><div style="position:absolute;left:554px;top:127.5px;width:66px;height:20.5px;background:#fff;border:1px solid #8a8a8a;border-right-color:#dcdcdc;border-bottom-color:#e6e6e6"></div><div class="t" style="left:554px;width:64px;text-align:right;top:130.5px;font-family:'Liberation Sans','Noto Sans CJK KR',sans-serif;font-size:14px;transform:scaleX(0.78);transform-origin:100% 0">300</div><div class="t" style="left:621px;top:131.5px;font-family:'Liberation Sans','Noto Sans CJK KR',sans-serif;font-size:13px">바</div><div style="position:absolute;left:636px;top:128px;width:1px;height:20px;background:#7d7d7d"></div><div style="position:absolute;left:637px;top:128px;width:1px;height:20px;background:#d8d8d8"></div><div class="cb" style="left:641.5px;top:128.5px;width:19.5px;height:19.5px;"><svg width="18" height="17" viewBox="0 0 19 18" style="display:block"><path d="M2.5 10.5 L7 9.2 L11.5 11.8 L16.5 9.5" stroke="#3a3a3a" stroke-width="1.1" fill="none"/><path d="M2.5 7.5 L6.5 12.8 L11.5 8 L16.5 5.2" stroke="#e01010" stroke-width="1.8" fill="none" stroke-linejoin="round"/></svg></div><div class="cb" style="left:664px;top:128.5px;width:19.5px;height:19.5px;"><svg width="18" height="17" viewBox="0 0 19 18" style="display:block"><path d="M4.5 5 v10 M8.5 3 v11 M12.5 2.5 v8" stroke="#e01010" stroke-width="1.8" stroke-dasharray="2.5 1.2"/><path d="M6.5 7 v8 M10.5 5 v10 M15 2 v12" stroke="#555" stroke-width="1.2"/></svg></div><div class="cb" style="left:685.5px;top:128.5px;width:19.5px;height:19.5px;"><svg width="18" height="17" viewBox="0 0 19 18" style="display:block"><path d="M4 9 v6 M7.5 7 v8 M11 5 v9 M14.5 2.5 v10" stroke="#555" stroke-width="2"/></svg></div><div class="cb" style="left:707.5px;top:128.5px;width:19.5px;height:19.5px;"><svg width="18" height="17" viewBox="0 0 19 18" style="display:block"><path d="M6 15 v-9 M2.5 8 L6 3 L9.5 8Z" fill="#222" stroke="#222" stroke-width="1.6"/><path d="M13 3.5 v8 M10 10 L13 14.5 L16 10Z" fill="#eee" stroke="#555" stroke-width="1.2"/></svg></div><div class="cb" style="left:736px;top:128.5px;width:19.5px;height:19.5px;"><svg width="18" height="17" viewBox="0 0 19 18" style="display:block"><path d="M3.5 3 h6 l3 3 v9 h-9Z" fill="#f8f8f8" stroke="#4c4c4c" stroke-width="1.2"/><path d="M9.5 3 v3 h3" fill="none" stroke="#4c4c4c" stroke-width="1"/><rect x="8" y="8.5" width="8" height="8.5" fill="#f0f0f0"/><text x="8" y="17" font-size="11" font-weight="bold" fill="#3c3c3c" font-family="Liberation Sans,sans-serif">D</text></svg></div><div class="cb" style="left:758px;top:128.5px;width:19.5px;height:19.5px;"><svg width="18" height="17" viewBox="0 0 19 18" style="display:block"><path d="M6.5 2 l3 3 l3 -3" stroke="#b4b4b4" stroke-width="1.2" fill="none"/><rect x="3.5" y="5" width="12" height="8.5" fill="none" stroke="#b4b4b4" stroke-width="1.5"/><rect x="6" y="7.5" width="6" height="3.5" fill="none" stroke="#b4b4b4" stroke-width="1"/><text x="9.5" y="17.5" font-size="9.5" font-weight="bold" fill="#b4b4b4" font-family="Liberation Sans,sans-serif">R</text></svg></div><div class="cb" style="left:780px;top:128.5px;width:19.5px;height:19.5px;"><svg width="18" height="17" viewBox="0 0 19 18" style="display:block"><path d="M9 5.5 H3 V15.5 H13 V11" fill="none" stroke="#4c4c4c" stroke-width="1.3"/><path d="M10.5 11.8 a3 3 0 1 1 -1 -3.6 M7.5 11.8 h3.4" stroke="#5a5a5a" stroke-width="1.4" fill="none"/><text x="10" y="10" font-size="11.5" font-weight="bold" fill="#e01010" font-family="Liberation Sans,sans-serif">R</text></svg></div><div class="cb" style="left:802px;top:128.5px;width:19.5px;height:19.5px;"><svg width="18" height="17" viewBox="0 0 19 18" style="display:block"><path d="M5.5 7 V4 H10" fill="none" stroke="#4c4c4c" stroke-width="1.2"/><path d="M10 7.5 H3 V15.5 H11 V11" fill="#f4f4f4" stroke="#4c4c4c" stroke-width="1.2"/><path d="M11 13 H13.5 V11" fill="none" stroke="#4c4c4c" stroke-width="1.2"/><text x="10" y="10" font-size="11.5" font-weight="bold" fill="#e01010" font-family="Liberation Sans,sans-serif">R</text></svg></div><div class="cb" style="left:830.5px;top:128.5px;width:19.5px;height:19.5px;"><svg width="18" height="17" viewBox="0 0 19 18" style="display:block"><rect x="3.5" y="3" width="12" height="12.5" fill="#f0f0f0" stroke="#4a4a4a" stroke-width="1.2"/><rect x="6.3" y="3.3" width="6.4" height="4.2" fill="#fafafa" stroke="#4a4a4a" stroke-width="1"/><rect x="6.3" y="10.5" width="6.4" height="5" fill="#fafafa" stroke="#4a4a4a" stroke-width="1"/><rect x="7.6" y="12" width="1.8" height="3.5" fill="#4a4a4a"/></svg></div><div class="cb" style="left:852px;top:128.5px;width:19.5px;height:19.5px;"><svg width="18" height="17" viewBox="0 0 19 18" style="display:block"><path d="M3 15.5 v-7.5 h4 l1.3 1.3 h5.2 v6.2Z" fill="#e6b422" stroke="#9a7406" stroke-width="0.9"/><path d="M3 15.5 l2.4 -4.6 h10.6 l-2.4 4.6Z" fill="#fde58e" stroke="#9a7406" stroke-width="0.9"/><path d="M8.5 8.5 C9.3 5.2 11.2 4 13.2 4.2 L12.8 2 L17.5 5.2 L13.8 8.4 L13.5 6.3 C11.8 6 10.2 6.6 8.5 8.5Z" fill="#e01010"/></svg></div><div style="position:absolute;left:731.5px;top:128px;width:1px;height:20px;background:#7d7d7d"></div><div style="position:absolute;left:732.5px;top:128px;width:1px;height:20px;background:#d8d8d8"></div><div style="position:absolute;left:826px;top:128px;width:1px;height:20px;background:#7d7d7d"></div><div style="position:absolute;left:827px;top:128px;width:1px;height:20px;background:#d8d8d8"></div><div style="position:absolute;left:875px;top:125px;width:28px;height:452px;background:#a9a9a9"></div><div style="position:absolute;left:902px;top:125px;width:1px;height:452px;background:#c4c4c4"></div><div style="position:absolute;left:874.5px;top:125px;width:1.5px;height:25px;background:#f4f4f4"></div><div style="position:absolute;left:880px;top:129.0px;width:18px;height:18px;background:#eaeaea;border:1px solid #767676;box-shadow:inset 1px 1px 0 #fff"></div><svg class="a" style="left:881px;top:130.0px" width="16" height="16" viewBox="0 0 17 17"><path d="M0 17 L17 0 L17 17Z" fill="#a4a4a4"/><path d="M11.2 2 L11.2 4.2 C8.6 3.6 7 4.6 6.9 6.3 L8.9 6.6 L5 9.6 L2.6 5.6 L4.7 5.9 C4.8 2.6 8 1.2 11.2 2Z" fill="#0c0c9c"/><path d="M5.8 15 L5.8 12.8 C8.4 13.4 10 12.4 10.1 10.7 L8.1 10.4 L12 7.4 L14.4 11.4 L12.3 11.1 C12.2 14.4 9 15.8 5.8 15Z" fill="#0c0c9c"/></svg><div style="position:absolute;left:880px;top:154.05px;width:18px;height:18px;background:#eaeaea;border:1px solid #767676;box-shadow:inset 1px 1px 0 #fff"></div><svg class="a" style="left:881px;top:155.05px" width="16" height="16" viewBox="0 0 17 17"><rect x="1.4" y="1.6" width="5.2" height="13.8" rx="1.8" fill="#f4f4ff" stroke="#3030b8" stroke-width="0.9"/><rect x="10.4" y="1.6" width="5.2" height="13.8" rx="1.8" fill="#f4f4ff" stroke="#3030b8" stroke-width="0.9"/><rect x="2.9" y="3" width="2.2" height="2" fill="#fff" stroke="#3030b8" stroke-width="0.7"/><rect x="2.9" y="6.6" width="2.2" height="3.8" fill="#fff" stroke="#3030b8" stroke-width="0.7"/><rect x="2.9" y="12" width="2.2" height="2" fill="#fff" stroke="#3030b8" stroke-width="0.7"/><rect x="11.9" y="3" width="2.2" height="2" fill="#fff" stroke="#3030b8" stroke-width="0.7"/><rect x="11.9" y="6.6" width="2.2" height="3.8" fill="#fff" stroke="#3030b8" stroke-width="0.7"/><rect x="11.9" y="12" width="2.2" height="2" fill="#fff" stroke="#3030b8" stroke-width="0.7"/><rect x="7.5" y="6.8" width="2" height="3.4" fill="#fff" stroke="#3030b8" stroke-width="0.7"/><path d="M8.5 3 L10 5.4 H7Z M8.5 14 L10 11.6 H7Z" fill="#e01010"/><path d="M6.8 6 h3.4 M6.8 11 h3.4" stroke="#e01010" stroke-width="0.9"/></svg><div style="position:absolute;left:878px;top:176.4px;width:23px;height:24px;background:#ececec;border:1px solid #fff"></div><div style="position:absolute;left:881.3px;top:179.9px;width:17.6px;height:17.8px;background:#fff;border:1px solid #7a7a7a"></div><svg class="a" style="left:881.5px;top:180.29999999999998px" width="17" height="17" viewBox="0 0 17 17"><path d="M4.6 1.6 L4.6 13.4 L7.3 10.9 L9.3 15.6 L11.6 14.6 L9.6 10 L13.4 10Z" fill="#0a0a9c"/></svg><div style="position:absolute;left:880px;top:204.15px;width:18px;height:18px;background:#9c9c9c;border-right:1.5px solid #f4f4f4;border-bottom:1.5px solid #f4f4f4;border-left:1px solid #a4a4a4;border-top:1px solid #a4a4a4"></div><svg class="a" style="left:880.5px;top:204.65px" width="17" height="17" viewBox="0 0 17 17"><path d="M2 2.5 h6 M9 14.5 h6 M14.5 2 L2.5 15 M4 6 h3 v3 M10 8.5 h3 v3" stroke="#d4d4d4" stroke-width="1.3" fill="none"/></svg><div style="position:absolute;left:880px;top:229.2px;width:18px;height:18px;background:#9c9c9c;border-right:1.5px solid #f4f4f4;border-bottom:1.5px solid #f4f4f4;border-left:1px solid #a4a4a4;border-top:1px solid #a4a4a4"></div><svg class="a" style="left:880.5px;top:229.7px" width="17" height="17" viewBox="0 0 17 17"><path d="M2 3 h12 v10 M4 13 c-2 -4 4 -8 8 -7 c2 3 -3 7 -6 5 c0 -2 2 -3 4 -3" stroke="#d4d4d4" stroke-width="1.3" fill="none"/></svg><div style="position:absolute;left:880px;top:254.25px;width:18px;height:18px;background:#9c9c9c;border-right:1.5px solid #f4f4f4;border-bottom:1.5px solid #f4f4f4;border-left:1px solid #a4a4a4;border-top:1px solid #a4a4a4"></div><svg class="a" style="left:880.5px;top:254.75px" width="17" height="17" viewBox="0 0 17 17"><path d="M2 3 h12 M3 6 h4 M3 8.5 h3 M9 6 h5 v4 c-2 4 -8 4 -10 2 M5 11 h6" stroke="#d4d4d4" stroke-width="1.3" fill="none"/></svg><div style="position:absolute;left:880px;top:279.3px;width:18px;height:18px;background:#9c9c9c;border-right:1.5px solid #f4f4f4;border-bottom:1.5px solid #f4f4f4;border-left:1px solid #a4a4a4;border-top:1px solid #a4a4a4"></div><svg class="a" style="left:880.5px;top:279.8px" width="17" height="17" viewBox="0 0 17 17"><path d="M2 2.5 h13 M4 5 v7 M4 8 h3 M8 5 v9 M14 6 L9 14 M10 12 h3" stroke="#d4d4d4" stroke-width="1.3" fill="none"/></svg><div style="position:absolute;left:880px;top:304.35px;width:18px;height:18px;background:#eaeaea;border:1px solid #767676;box-shadow:inset 1px 1px 0 #fff"></div><svg class="a" style="left:881px;top:305.35px" width="16" height="16" viewBox="0 0 17 17"><path d="M3 8.5 h11" stroke="#1414b8" stroke-width="1.4"/><rect x="2" y="7" width="3" height="3" fill="#e01010"/><rect x="12" y="7" width="3" height="3" fill="#e01010"/></svg><div style="position:absolute;left:880px;top:329.4px;width:18px;height:18px;background:#eaeaea;border:1px solid #767676;box-shadow:inset 1px 1px 0 #fff"></div><svg class="a" style="left:881px;top:330.4px" width="16" height="16" viewBox="0 0 17 17"><path d="M8.5 3 v11" stroke="#1414b8" stroke-width="1.4"/><rect x="7" y="2" width="3" height="3" fill="#e01010"/><rect x="7" y="12" width="3" height="3" fill="#e01010"/></svg><div style="position:absolute;left:880px;top:354.45000000000005px;width:18px;height:18px;background:#eaeaea;border:1px solid #767676;box-shadow:inset 1px 1px 0 #fff"></div><svg class="a" style="left:881px;top:355.45000000000005px" width="16" height="16" viewBox="0 0 17 17"><path d="M4.5 8 v6.5 h7.5 v-8" stroke="#1414b8" stroke-width="1.3" fill="none"/><rect x="3.2" y="7" width="2.8" height="4" fill="#1414b8"/><path d="M12 2 v6" stroke="#e01010" stroke-width="1.2"/><rect x="10.8" y="3.5" width="2.6" height="3.2" fill="#e01010"/></svg><div style="position:absolute;left:880px;top:379.5px;width:18px;height:18px;background:#eaeaea;border:1px solid #767676;box-shadow:inset 1px 1px 0 #fff"></div><svg class="a" style="left:881px;top:380.5px" width="16" height="16" viewBox="0 0 17 17"><path d="M3.5 13.5 L13.5 3.5" stroke="#1414b8" stroke-width="1.4"/><rect x="2" y="12" width="3" height="3" fill="#e01010"/><rect x="12" y="2" width="3" height="3" fill="#e01010"/></svg><div style="position:absolute;left:880px;top:404.55px;width:18px;height:18px;background:#eaeaea;border:1px solid #767676;box-shadow:inset 1px 1px 0 #fff"></div><svg class="a" style="left:881px;top:405.55px" width="16" height="16" viewBox="0 0 17 17"><path d="M2 15 L15 2" stroke="#10107c" stroke-width="1.2"/><text x="0.8" y="8.6" font-size="10" fill="#d80c0c" font-family="Liberation Sans,sans-serif" font-weight="bold">A</text><text x="8.8" y="16" font-size="10" fill="#d80c0c" font-family="Liberation Sans,sans-serif" font-weight="bold">T</text></svg><div style="position:absolute;left:880px;top:429.6px;width:18px;height:18px;background:#eaeaea;border:1px solid #767676;box-shadow:inset 1px 1px 0 #fff"></div><svg class="a" style="left:881px;top:430.6px" width="16" height="16" viewBox="0 0 17 17"><path d="M2 3 h12.5 M5.5 5 h9 M7 7 h7.5" stroke="#d01010" stroke-width="1"/><path d="M7 9.5 h7.5 M4.5 11.7 h10 M2 14 h12.5" stroke="#1414b0" stroke-width="1"/></svg><div style="position:absolute;left:880px;top:454.65000000000003px;width:18px;height:18px;background:#eaeaea;border:1px solid #767676;box-shadow:inset 1px 1px 0 #fff"></div><svg class="a" style="left:881px;top:455.65000000000003px" width="16" height="16" viewBox="0 0 17 17"><text x="1" y="9" font-size="10" fill="#d80c0c" font-family="Liberation Sans,sans-serif" font-weight="bold">f/L</text><path d="M3.5 10.5 v5 M6.8 10.5 v5 M10.1 10.5 v5 M13.4 10.5 v5" stroke="#1414b0" stroke-width="1.3"/></svg><div style="position:absolute;left:880px;top:479.7px;width:18px;height:18px;background:#eaeaea;border:1px solid #767676;box-shadow:inset 1px 1px 0 #fff"></div><svg class="a" style="left:881px;top:480.7px" width="16" height="16" viewBox="0 0 17 17"><text x="1.5" y="9" font-size="10" fill="#d80c0c" font-family="Liberation Sans,sans-serif" font-weight="bold">f/f</text><path d="M3 12 c3 0.5 5 -0.5 7 -2 c1.5 -0.8 3.5 0 2.5 1.5 c-1.5 1.8 -4.5 0 -5.5 1.8 M3 15 c4 0 8 -0.3 12 -2.5" stroke="#1414b0" stroke-width="1.1" fill="none"/></svg><div style="position:absolute;left:880px;top:504.75px;width:18px;height:18px;background:#eaeaea;border:1px solid #767676;box-shadow:inset 1px 1px 0 #fff"></div><svg class="a" style="left:881px;top:505.75px" width="16" height="16" viewBox="0 0 17 17"><text x="3" y="8" font-size="9.5" fill="#d80c0c" font-family="Liberation Sans,sans-serif" font-weight="bold">f</text><circle cx="12.6" cy="5.8" r="2" fill="none" stroke="#d80c0c" stroke-width="1.2"/><path d="M1.5 15.5 C5 13 8 8 10.5 2 M15.5 15.5 C12 13 9.5 10 8.3 7.5 M5 15.5 c1 -3.5 6 -4 7.5 0" stroke="#10109c" stroke-width="1.2" fill="none"/></svg><div style="position:absolute;left:880px;top:529.8px;width:18px;height:18px;background:#eaeaea;border:1px solid #767676;box-shadow:inset 1px 1px 0 #fff"></div><svg class="a" style="left:881px;top:530.8px" width="16" height="16" viewBox="0 0 17 17"><text x="0.6" y="9" font-size="10" fill="#d80c0c" font-family="Liberation Sans,sans-serif" font-weight="bold">f/R</text><path d="M2 10.8 h13" stroke="#d01010" stroke-width="1.1"/><path d="M2 13 h13 M2 15.3 h13" stroke="#1414b0" stroke-width="1.2" stroke-dasharray="5 0.8"/></svg><div style="position:absolute;left:880px;top:554.85px;width:18px;height:13px;background:#eaeaea;border:1px solid #767676;border-bottom:none;box-shadow:inset 1px 1px 0 #fff"></div><svg class="a" style="left:880.5px;top:555.35px" width="17" height="12.5" viewBox="0 0 17 12.5"><path d="M3.5 11 L11 3.5 M9 12.5 L15.5 6 M3.5 11 l2.5 2.5 M14 11 v2.5" stroke="#1414b0" stroke-width="1.1" fill="none"/></svg><svg class="a" style="left:892px;top:567px" width="9" height="10" viewBox="0 0 9 10"><path d="M1 1 L4.5 4.5 L8 1 M1 5 L4.5 8.5 L8 5" stroke="#111" stroke-width="1.6" fill="none"/></svg><svg class="a" style="left:28px;top:150px;background:#fff" width="847" height="407" viewBox="28 150 847 407" font-family="'Liberation Sans','Noto Sans CJK KR',sans-serif" font-size="12"><path d="M28 199.5 H788" stroke="#a8a8a8" stroke-width="1" stroke-dasharray="2 3"/><path d="M28 285.5 H788" stroke="#a8a8a8" stroke-width="1" stroke-dasharray="2 3"/><path d="M28 372.5 H788" stroke="#a8a8a8" stroke-width="1" stroke-dasharray="2 3"/><path d="M28 463.5 H788" stroke="#a8a8a8" stroke-width="1" stroke-dasharray="2 3"/><path d="M35.5 150 V531" stroke="#a8a8a8" stroke-width="1" stroke-dasharray="2 3"/><path d="M227.5 150 V531" stroke="#a8a8a8" stroke-width="1" stroke-dasharray="2 3"/><path d="M323.5 150 V531" stroke="#a8a8a8" stroke-width="1" stroke-dasharray="2 3"/><path d="M419.5 150 V531" stroke="#a8a8a8" stroke-width="1" stroke-dasharray="2 3"/><path d="M515.5 150 V531" stroke="#a8a8a8" stroke-width="1" stroke-dasharray="2 3"/><path d="M611.5 150 V531" stroke="#a8a8a8" stroke-width="1" stroke-dasharray="2 3"/><path d="M707.5 150 V531" stroke="#a8a8a8" stroke-width="1" stroke-dasharray="2 3"/><path d="M131.5 150 V531" stroke="#b8b8b8" stroke-width="1"/><rect x="32" y="524.2" width="7" height="3.5" fill="#0f7dc2" shape-rendering="crispEdges"/><rect x="40" y="524.2" width="7" height="3.5" fill="#0f7dc2" shape-rendering="crispEdges"/><rect x="48" y="523.0" width="7" height="4.7" fill="#0f7dc2" shape-rendering="crispEdges"/><rect x="56" y="524.9" width="7" height="2.8" fill="#0f7dc2" shape-rendering="crispEdges"/><rect x="64" y="523.0" width="7" height="4.7" fill="#0f7dc2" shape-rendering="crispEdges"/><rect x="72" y="524.2" width="7" height="3.5" fill="#0f7dc2" shape-rendering="crispEdges"/><rect x="80" y="524.2" width="7" height="3.5" fill="#0f7dc2" shape-rendering="crispEdges"/><rect x="88" y="523.0" width="7" height="4.7" fill="#0f7dc2" shape-rendering="crispEdges"/><rect x="96" y="524.2" width="7" height="3.5" fill="#0f7dc2" shape-rendering="crispEdges"/><rect x="104" y="515.0" width="7" height="12.7" fill="#0f7dc2" shape-rendering="crispEdges"/><rect x="112" y="520.2" width="7" height="7.5" fill="#0f7dc2" shape-rendering="crispEdges"/><rect x="120" y="512.0" width="7" height="15.7" fill="#0f7dc2" shape-rendering="crispEdges"/><rect x="128" y="470.3" width="7" height="57.4" fill="#0f7dc2" shape-rendering="crispEdges"/><rect x="136" y="503.8" width="7" height="23.9" fill="#0f7dc2" shape-rendering="crispEdges"/><rect x="144" y="507.1" width="7" height="20.6" fill="#0f7dc2" shape-rendering="crispEdges"/><rect x="152" y="512.0" width="7" height="15.7" fill="#0f7dc2" shape-rendering="crispEdges"/><rect x="160" y="521.1" width="7" height="6.6" fill="#0f7dc2" shape-rendering="crispEdges"/><rect x="168" y="510.8" width="7" height="16.9" fill="#0f7dc2" shape-rendering="crispEdges"/><rect x="176" y="509.9" width="7" height="17.8" fill="#0f7dc2" shape-rendering="crispEdges"/><rect x="184" y="516.9" width="7" height="10.8" fill="#0f7dc2" shape-rendering="crispEdges"/><rect x="192" y="520.2" width="7" height="7.5" fill="#0f7dc2" shape-rendering="crispEdges"/><rect x="200" y="517.9" width="7" height="9.8" fill="#0f7dc2" shape-rendering="crispEdges"/><rect x="208" y="519.0" width="7" height="8.7" fill="#0f7dc2" shape-rendering="crispEdges"/><rect x="216" y="516.9" width="7" height="10.8" fill="#0f7dc2" shape-rendering="crispEdges"/><rect x="224" y="513.9" width="7" height="13.8" fill="#0f7dc2" shape-rendering="crispEdges"/><rect x="232" y="516.9" width="7" height="10.8" fill="#0f7dc2" shape-rendering="crispEdges"/><rect x="240" y="522.1" width="7" height="5.6" fill="#0f7dc2" shape-rendering="crispEdges"/><rect x="248" y="519.0" width="7" height="8.7" fill="#0f7dc2" shape-rendering="crispEdges"/><rect x="256" y="520.9" width="7" height="6.8" fill="#0f7dc2" shape-rendering="crispEdges"/><rect x="264" y="520.0" width="7" height="7.7" fill="#0f7dc2" shape-rendering="crispEdges"/><rect x="272" y="522.1" width="7" height="5.6" fill="#0f7dc2" shape-rendering="crispEdges"/><rect x="280" y="519.0" width="7" height="8.7" fill="#0f7dc2" shape-rendering="crispEdges"/><rect x="288" y="514.1" width="7" height="13.6" fill="#0f7dc2" shape-rendering="crispEdges"/><rect x="296" y="520.2" width="7" height="7.5" fill="#0f7dc2" shape-rendering="crispEdges"/><rect x="304" y="521.1" width="7" height="6.6" fill="#0f7dc2" shape-rendering="crispEdges"/><rect x="312" y="522.1" width="7" height="5.6" fill="#0f7dc2" shape-rendering="crispEdges"/><rect x="320" y="521.1" width="7" height="6.6" fill="#0f7dc2" shape-rendering="crispEdges"/><rect x="328" y="474.2" width="7" height="53.5" fill="#0f7dc2" shape-rendering="crispEdges"/><rect x="336" y="513.2" width="7" height="14.5" fill="#0f7dc2" shape-rendering="crispEdges"/><rect x="344" y="522.1" width="7" height="5.6" fill="#0f7dc2" shape-rendering="crispEdges"/><rect x="352" y="517.1" width="7" height="10.6" fill="#0f7dc2" shape-rendering="crispEdges"/><rect x="360" y="523.0" width="7" height="4.7" fill="#0f7dc2" shape-rendering="crispEdges"/><rect x="368" y="523.0" width="7" height="4.7" fill="#0f7dc2" shape-rendering="crispEdges"/><rect x="376" y="523.9" width="7" height="3.8" fill="#0f7dc2" shape-rendering="crispEdges"/><rect x="384" y="523.9" width="7" height="3.8" fill="#0f7dc2" shape-rendering="crispEdges"/><rect x="392" y="519.0" width="7" height="8.7" fill="#0f7dc2" shape-rendering="crispEdges"/><rect x="400" y="523.9" width="7" height="3.8" fill="#0f7dc2" shape-rendering="crispEdges"/><rect x="408" y="523.9" width="7" height="3.8" fill="#0f7dc2" shape-rendering="crispEdges"/><rect x="416" y="519.0" width="7" height="8.7" fill="#0f7dc2" shape-rendering="crispEdges"/><rect x="424" y="523.0" width="7" height="4.7" fill="#0f7dc2" shape-rendering="crispEdges"/><rect x="432" y="523.9" width="7" height="3.8" fill="#0f7dc2" shape-rendering="crispEdges"/><rect x="440" y="523.9" width="7" height="3.8" fill="#0f7dc2" shape-rendering="crispEdges"/><rect x="448" y="522.1" width="7" height="5.6" fill="#0f7dc2" shape-rendering="crispEdges"/><rect x="456" y="523.9" width="7" height="3.8" fill="#0f7dc2" shape-rendering="crispEdges"/><rect x="464" y="523.0" width="7" height="4.7" fill="#0f7dc2" shape-rendering="crispEdges"/><rect x="472" y="522.1" width="7" height="5.6" fill="#0f7dc2" shape-rendering="crispEdges"/><rect x="480" y="522.1" width="7" height="5.6" fill="#0f7dc2" shape-rendering="crispEdges"/><rect x="488" y="523.9" width="7" height="3.8" fill="#0f7dc2" shape-rendering="crispEdges"/><rect x="496" y="523.0" width="7" height="4.7" fill="#0f7dc2" shape-rendering="crispEdges"/><rect x="504" y="523.9" width="7" height="3.8" fill="#0f7dc2" shape-rendering="crispEdges"/><rect x="512" y="523.9" width="7" height="3.8" fill="#0f7dc2" shape-rendering="crispEdges"/><rect x="520" y="523.9" width="7" height="3.8" fill="#0f7dc2" shape-rendering="crispEdges"/><rect x="528" y="523.9" width="7" height="3.8" fill="#0f7dc2" shape-rendering="crispEdges"/><rect x="536" y="523.9" width="7" height="3.8" fill="#0f7dc2" shape-rendering="crispEdges"/><rect x="544" y="518.1" width="7" height="9.6" fill="#0f7dc2" shape-rendering="crispEdges"/><rect x="552" y="522.8" width="7" height="4.9" fill="#0f7dc2" shape-rendering="crispEdges"/><rect x="560" y="519.0" width="7" height="8.7" fill="#0f7dc2" shape-rendering="crispEdges"/><rect x="568" y="522.8" width="7" height="4.9" fill="#0f7dc2" shape-rendering="crispEdges"/><rect x="576" y="523.9" width="7" height="3.8" fill="#0f7dc2" shape-rendering="crispEdges"/><rect x="584" y="523.9" width="7" height="3.8" fill="#0f7dc2" shape-rendering="crispEdges"/><rect x="592" y="512.9" width="7" height="14.8" fill="#0f7dc2" shape-rendering="crispEdges"/><rect x="600" y="519.0" width="7" height="8.7" fill="#0f7dc2" shape-rendering="crispEdges"/><rect x="608" y="515.7" width="7" height="12.0" fill="#0f7dc2" shape-rendering="crispEdges"/><rect x="616" y="519.0" width="7" height="8.7" fill="#0f7dc2" shape-rendering="crispEdges"/><rect x="624" y="522.8" width="7" height="4.9" fill="#0f7dc2" shape-rendering="crispEdges"/><rect x="632" y="521.8" width="7" height="5.9" fill="#0f7dc2" shape-rendering="crispEdges"/><rect x="640" y="520.0" width="7" height="7.7" fill="#0f7dc2" shape-rendering="crispEdges"/><rect x="648" y="521.8" width="7" height="5.9" fill="#0f7dc2" shape-rendering="crispEdges"/><rect x="656" y="523.9" width="7" height="3.8" fill="#0f7dc2" shape-rendering="crispEdges"/><rect x="664" y="522.8" width="7" height="4.9" fill="#0f7dc2" shape-rendering="crispEdges"/><rect x="672" y="520.0" width="7" height="7.7" fill="#0f7dc2" shape-rendering="crispEdges"/><rect x="680" y="522.8" width="7" height="4.9" fill="#0f7dc2" shape-rendering="crispEdges"/><rect x="688" y="522.8" width="7" height="4.9" fill="#0f7dc2" shape-rendering="crispEdges"/><rect x="696" y="523.9" width="7" height="3.8" fill="#0f7dc2" shape-rendering="crispEdges"/><rect x="704" y="523.9" width="7" height="3.8" fill="#0f7dc2" shape-rendering="crispEdges"/><rect x="712" y="520.0" width="7" height="7.7" fill="#0f7dc2" shape-rendering="crispEdges"/><rect x="720" y="520.9" width="7" height="6.8" fill="#0f7dc2" shape-rendering="crispEdges"/><rect x="728" y="519.0" width="7" height="8.7" fill="#0f7dc2" shape-rendering="crispEdges"/><rect x="736" y="423.8" width="7" height="103.9" fill="#0f7dc2" shape-rendering="crispEdges"/><path d="M28 388.4 L64 385.7 L100 381.5 L126 376.6 L150 368.5 L192 355 L228 342 L276 324.5 L324 306 L372 287 L420 267.6 L460 252.5 L500 238 L540 224 L580 209.5 L596 203.8 L640 204 L700 205 L740 206.5" stroke="#15781f" stroke-width="1.05" fill="none" stroke-linejoin="round" transform="translate(-0.5 0)"/><path d="M28 374.5 L80 375.5 L124 375.2 L284 206.5 L300 205.5 L340 204 L380 202.5 L420 202.5 L460 203 L520 203 L580 202 L596 202 L620 204.5 L650 208 L680 210.5 L700 212 L716 213 L732 213.5 L740 215" stroke="#15158c" stroke-width="1.05" fill="none" stroke-linejoin="round" transform="translate(-0.5 0)"/><path d="M28 375.5 L60 376.5 L100 376 L124 375.5 L132 346 L140 314 L148 284 L156 251 L164 219 L172 216 L180 212.5 L188 209 L196 207.5 L204 205 L212 204 L228 203 L244 205.5 L260 207 L276 206 L292 204.5 L308 203 L324 201.5 L332 200 L340 197 L348 196 L356 196.5 L364 198 L372 200 L388 201.5 L404 203.5 L420 204.5 L444 204.5 L468 204.5 L500 203 L540 202 L588 201.5 L596 203 L604 208 L612 213.5 L620 219 L628 224 L636 226.5 L644 227 L652 225 L660 222 L668 218 L676 215 L684 214 L692 213.5 L700 213 L708 211.5 L716 210 L724 208 L732 207 L740 214" stroke="#c01818" stroke-width="1.05" fill="none" stroke-linejoin="round" transform="translate(-0.5 0)"/><g shape-rendering="crispEdges"><path d="M35.5 372 V377" stroke="#08088c" stroke-width="1"/><rect x="32" y="372" width="7" height="5" fill="#0808dc"/><path d="M43.5 376 V379" stroke="#08088c" stroke-width="1"/><rect x="40" y="376" width="7" height="3" fill="#0808dc"/><path d="M51.5 373 V380" stroke="#a81010" stroke-width="1"/><path d="M48 376.5 H55" stroke="#e40808" stroke-width="1"/><path d="M59.5 374 V378" stroke="#a81010" stroke-width="1"/><path d="M56 376.5 H63" stroke="#e40808" stroke-width="1"/><path d="M67.5 375 V378" stroke="#a81010" stroke-width="1"/><path d="M64 376.5 H71" stroke="#e40808" stroke-width="1"/><path d="M75.5 372 V378" stroke="#08088c" stroke-width="1"/><rect x="72" y="376" width="7" height="1" fill="#0808dc"/><path d="M83.5 374 V378" stroke="#a81010" stroke-width="1"/><path d="M80 376.5 H87" stroke="#e40808" stroke-width="1"/><path d="M91.5 374 V378" stroke="#a81010" stroke-width="1"/><path d="M88 376.5 H95" stroke="#e40808" stroke-width="1"/><path d="M99.5 372 V378" stroke="#a81010" stroke-width="1"/><rect x="96" y="372" width="7" height="6" fill="#e40808"/><path d="M107.5 363 V378" stroke="#a81010" stroke-width="1"/><rect x="104" y="368" width="7" height="10" fill="#e40808"/><path d="M115.5 363 V376" stroke="#08088c" stroke-width="1"/><rect x="112" y="368" width="7" height="5" fill="#0808dc"/><path d="M123.5 374 V378" stroke="#a81010" stroke-width="1"/><path d="M120 376.5 H127" stroke="#e40808" stroke-width="1"/><path d="M131.5 212 V255" stroke="#a81010" stroke-width="1"/><rect x="128" y="212" width="7" height="18" fill="#e40808"/><path d="M139.5 203 V224" stroke="#08088c" stroke-width="1"/><rect x="136" y="212" width="7" height="8" fill="#0808dc"/><path d="M147.5 212 V238" stroke="#08088c" stroke-width="1"/><rect x="144" y="220" width="7" height="6" fill="#0808dc"/><path d="M155.5 207 V226" stroke="#a81010" stroke-width="1"/><rect x="152" y="212" width="7" height="14" fill="#e40808"/><path d="M163.5 207 V216" stroke="#08088c" stroke-width="1"/><rect x="160" y="212" width="7" height="4" fill="#0808dc"/><path d="M171.5 203 V216" stroke="#a81010" stroke-width="1"/><rect x="168" y="208" width="7" height="8" fill="#e40808"/><path d="M179.5 199 V206" stroke="#a81010" stroke-width="1"/><rect x="176" y="201" width="7" height="5" fill="#e40808"/><path d="M187.5 199 V212" stroke="#08088c" stroke-width="1"/><rect x="184" y="203" width="7" height="9" fill="#0808dc"/><path d="M195.5 203 V212" stroke="#a81010" stroke-width="1"/><rect x="192" y="203" width="7" height="9" fill="#e40808"/><path d="M203.5 200 V206" stroke="#a81010" stroke-width="1"/><path d="M200 204.5 H207" stroke="#e40808" stroke-width="1"/><path d="M211.5 200 V204" stroke="#08088c" stroke-width="1"/><rect x="208" y="200" width="7" height="4" fill="#0808dc"/><path d="M219.5 200 V206" stroke="#a81010" stroke-width="1"/><path d="M216 200.5 H223" stroke="#e40808" stroke-width="1"/><path d="M227.5 199 V208" stroke="#08088c" stroke-width="1"/><rect x="224" y="199" width="7" height="9" fill="#0808dc"/><path d="M235.5 204 V216" stroke="#08088c" stroke-width="1"/><rect x="232" y="204" width="7" height="4" fill="#0808dc"/><path d="M243.5 204 V211" stroke="#a81010" stroke-width="1"/><path d="M240 207.5 H247" stroke="#e40808" stroke-width="1"/><path d="M251.5 204 V212" stroke="#a81010" stroke-width="1"/><rect x="248" y="208" width="7" height="4" fill="#e40808"/><path d="M259.5 204 V211" stroke="#08088c" stroke-width="1"/><rect x="256" y="204" width="7" height="2" fill="#0808dc"/><path d="M267.5 204 V211" stroke="#a81010" stroke-width="1"/><rect x="264" y="204" width="7" height="4" fill="#e40808"/><path d="M275.5 203 V207" stroke="#a81010" stroke-width="1"/><path d="M272 205.5 H279" stroke="#e40808" stroke-width="1"/><path d="M283.5 204 V208" stroke="#a81010" stroke-width="1"/><rect x="280" y="204" width="7" height="4" fill="#e40808"/><path d="M291.5 199 V208" stroke="#a81010" stroke-width="1"/><rect x="288" y="204" width="7" height="2" fill="#e40808"/><path d="M299.5 199 V202" stroke="#08088c" stroke-width="1"/><rect x="296" y="199" width="7" height="3" fill="#0808dc"/><path d="M307.5 199 V203" stroke="#a81010" stroke-width="1"/><path d="M304 202.5 H311" stroke="#e40808" stroke-width="1"/><path d="M315.5 199 V204" stroke="#08088c" stroke-width="1"/><rect x="312" y="199" width="7" height="5" fill="#0808dc"/><path d="M323.5 200 V202" stroke="#a81010" stroke-width="1"/><path d="M320 200.5 H327" stroke="#e40808" stroke-width="1"/><path d="M331.5 186 V203" stroke="#a81010" stroke-width="1"/><rect x="328" y="194" width="7" height="5" fill="#e40808"/><path d="M339.5 187 V198" stroke="#a81010" stroke-width="1"/><path d="M336 191.5 H343" stroke="#e40808" stroke-width="1"/><path d="M347.5 190 V199" stroke="#08088c" stroke-width="1"/><rect x="344" y="190" width="7" height="9" fill="#0808dc"/><path d="M355.5 194 V206" stroke="#08088c" stroke-width="1"/><rect x="352" y="197" width="7" height="5" fill="#0808dc"/><path d="M363.5 199 V206" stroke="#08088c" stroke-width="1"/><rect x="360" y="199" width="7" height="5" fill="#0808dc"/><path d="M371.5 198 V206" stroke="#a81010" stroke-width="1"/><rect x="368" y="198" width="7" height="5" fill="#e40808"/><path d="M379.5 200 V203" stroke="#a81010" stroke-width="1"/><path d="M376 200.5 H383" stroke="#e40808" stroke-width="1"/><path d="M387.5 200 V203" stroke="#a81010" stroke-width="1"/><rect x="384" y="200" width="7" height="2" fill="#e40808"/><path d="M395.5 199 V211" stroke="#08088c" stroke-width="1"/><rect x="392" y="199" width="7" height="9" fill="#0808dc"/><path d="M403.5 202 V211" stroke="#a81010" stroke-width="1"/><rect x="400" y="205" width="7" height="3" fill="#e40808"/><path d="M411.5 204 V208" stroke="#08088c" stroke-width="1"/><rect x="408" y="204" width="7" height="4" fill="#0808dc"/><path d="M419.5 201 V212" stroke="#a81010" stroke-width="1"/><rect x="416" y="201" width="7" height="5" fill="#e40808"/><path d="M427.5 199 V204" stroke="#08088c" stroke-width="1"/><rect x="424" y="199" width="7" height="5" fill="#0808dc"/><path d="M435.5 204 V208" stroke="#08088c" stroke-width="1"/><rect x="432" y="204" width="7" height="4" fill="#0808dc"/><path d="M443.5 204 V208" stroke="#a81010" stroke-width="1"/><rect x="440" y="204" width="7" height="4" fill="#e40808"/><path d="M451.5 200 V207" stroke="#a81010" stroke-width="1"/><path d="M448 203.5 H455" stroke="#e40808" stroke-width="1"/><path d="M459.5 202 V205" stroke="#a81010" stroke-width="1"/><path d="M456 204.5 H463" stroke="#e40808" stroke-width="1"/><path d="M467.5 202 V204" stroke="#a81010" stroke-width="1"/><path d="M464 203.5 H471" stroke="#e40808" stroke-width="1"/><path d="M475.5 200 V207" stroke="#08088c" stroke-width="1"/><path d="M472 204.5 H479" stroke="#0808dc" stroke-width="1"/><path d="M483.5 200 V207" stroke="#a81010" stroke-width="1"/><path d="M480 203.5 H487" stroke="#e40808" stroke-width="1"/><path d="M491.5 199 V207" stroke="#08088c" stroke-width="1"/><rect x="488" y="199" width="7" height="5" fill="#0808dc"/><path d="M499.5 200 V204" stroke="#a81010" stroke-width="1"/><rect x="496" y="200" width="7" height="4" fill="#e40808"/><path d="M507.5 200 V203" stroke="#a81010" stroke-width="1"/><rect x="504" y="201" width="7" height="1" fill="#e40808"/><path d="M515.5 200 V204" stroke="#08088c" stroke-width="1"/><rect x="512" y="200" width="7" height="4" fill="#0808dc"/><path d="M523.5 200 V202" stroke="#a81010" stroke-width="1"/><rect x="520" y="200" width="7" height="2" fill="#e40808"/><path d="M531.5 200 V204" stroke="#08088c" stroke-width="1"/><rect x="528" y="200" width="7" height="4" fill="#0808dc"/><path d="M539.5 200 V202" stroke="#a81010" stroke-width="1"/><rect x="536" y="200" width="7" height="2" fill="#e40808"/><path d="M547.5 200 V202" stroke="#a81010" stroke-width="1"/><rect x="544" y="200" width="7" height="2" fill="#e40808"/><path d="M555.5 200 V202" stroke="#a81010" stroke-width="1"/><rect x="552" y="200" width="7" height="2" fill="#e40808"/><path d="M563.5 200 V202" stroke="#a81010" stroke-width="1"/><rect x="560" y="200" width="7" height="2" fill="#e40808"/><path d="M571.5 200 V204" stroke="#08088c" stroke-width="1"/><rect x="568" y="200" width="7" height="4" fill="#0808dc"/><path d="M579.5 200 V202" stroke="#a81010" stroke-width="1"/><rect x="576" y="200" width="7" height="2" fill="#e40808"/><path d="M587.5 200 V204" stroke="#a81010" stroke-width="1"/><rect x="584" y="200" width="7" height="4" fill="#e40808"/><path d="M595.5 198 V211" stroke="#08088c" stroke-width="1"/><rect x="592" y="198" width="7" height="9" fill="#0808dc"/><path d="M603.5 208 V226" stroke="#08088c" stroke-width="1"/><rect x="600" y="208" width="7" height="18" fill="#0808dc"/><path d="M611.5 216 V237" stroke="#08088c" stroke-width="1"/><rect x="608" y="225" width="7" height="5" fill="#0808dc"/><path d="M619.5 220 V230" stroke="#a81010" stroke-width="1"/><rect x="616" y="220" width="7" height="10" fill="#e40808"/><path d="M627.5 220 V226" stroke="#08088c" stroke-width="1"/><rect x="624" y="220" width="7" height="6" fill="#0808dc"/><path d="M635.5 220 V230" stroke="#08088c" stroke-width="1"/><rect x="632" y="220" width="7" height="10" fill="#0808dc"/><path d="M643.5 216 V230" stroke="#a81010" stroke-width="1"/><rect x="640" y="216" width="7" height="14" fill="#e40808"/><path d="M651.5 212 V221" stroke="#a81010" stroke-width="1"/><rect x="648" y="214" width="7" height="7" fill="#e40808"/><path d="M659.5 212 V216" stroke="#08088c" stroke-width="1"/><rect x="656" y="212" width="7" height="3" fill="#0808dc"/><path d="M667.5 208 V215" stroke="#a81010" stroke-width="1"/><rect x="664" y="210" width="7" height="5" fill="#e40808"/><path d="M675.5 203 V215" stroke="#08088c" stroke-width="1"/><rect x="672" y="209" width="7" height="6" fill="#0808dc"/><path d="M683.5 212 V217" stroke="#08088c" stroke-width="1"/><rect x="680" y="212" width="7" height="5" fill="#0808dc"/><path d="M691.5 208 V217" stroke="#a81010" stroke-width="1"/><rect x="688" y="212" width="7" height="5" fill="#e40808"/><path d="M699.5 208 V212" stroke="#a81010" stroke-width="1"/><path d="M696 212.5 H703" stroke="#e40808" stroke-width="1"/><path d="M707.5 208 V212" stroke="#a81010" stroke-width="1"/><path d="M704 208.5 H711" stroke="#e40808" stroke-width="1"/><path d="M715.5 206 V211" stroke="#a81010" stroke-width="1"/><path d="M712 208.5 H719" stroke="#e40808" stroke-width="1"/><path d="M723.5 204 V207" stroke="#a81010" stroke-width="1"/><path d="M720 204.5 H727" stroke="#e40808" stroke-width="1"/><path d="M731.5 203 V212" stroke="#08088c" stroke-width="1"/><rect x="728" y="203" width="7" height="6" fill="#0808dc"/></g><path d="M736 242.5 h8" stroke="#1414c8" stroke-width="1.3"/><path d="M748 527.5 H788" stroke="#a8a8a8" stroke-dasharray="2 3"/><path d="M28 150.5 H875" stroke="#000" stroke-width="1.2"/><path d="M28 405.5 H788" stroke="#000" stroke-width="1.15"/><path d="M28 531.5 H789" stroke="#000" stroke-width="1.15"/><path d="M788 150 V532" stroke="#000" stroke-width="1.6"/><path d="M788 156.5 h3.5" stroke="#000" stroke-width="1.15"/><path d="M788 199.5 h5.5" stroke="#000" stroke-width="1.15"/><path d="M788 242.5 h3.5" stroke="#000" stroke-width="1.15"/><path d="M788 285.5 h5.5" stroke="#000" stroke-width="1.15"/><path d="M788 329.5 h3.5" stroke="#000" stroke-width="1.15"/><path d="M788 372.5 h5.5" stroke="#000" stroke-width="1.15"/><path d="M788 463.5 h5.5" stroke="#000" stroke-width="1.15"/><path d="M788 527.5 h5.5" stroke="#000" stroke-width="1.15"/><text x="796.8" y="203.5" fill="#111" font-size="12.5">90000</text><text x="796.8" y="289.5" fill="#111" font-size="12.5">88000</text><text x="796.8" y="376.5" fill="#111" font-size="12.5">86000</text><text x="796.8" y="467.5" fill="#111" font-size="12.5">5000000</text><text x="796.8" y="531.5" fill="#111" font-size="12.5">0</text><path d="M35.5 531 v6" stroke="#000" stroke-width="1.1"/><path d="M131.5 531 v6" stroke="#000" stroke-width="1.1"/><path d="M227.5 531 v6" stroke="#000" stroke-width="1.1"/><path d="M323.5 531 v6" stroke="#000" stroke-width="1.1"/><path d="M419.5 531 v6" stroke="#000" stroke-width="1.1"/><path d="M515.5 531 v6" stroke="#000" stroke-width="1.1"/><path d="M611.5 531 v6" stroke="#000" stroke-width="1.1"/><path d="M707.5 531 v6" stroke="#000" stroke-width="1.1"/><text x="36" y="552" text-anchor="middle" fill="#222" font-size="12">14:30</text><text x="132" y="552" text-anchor="middle" fill="#222" font-size="12" font-weight="bold">10/02</text><text x="228" y="552" text-anchor="middle" fill="#222" font-size="12">10:05</text><text x="324" y="552" text-anchor="middle" fill="#222" font-size="12">11:05</text><text x="420" y="552" text-anchor="middle" fill="#222" font-size="12">12:05</text><text x="516" y="552" text-anchor="middle" fill="#222" font-size="12">13:05</text><text x="612" y="552" text-anchor="middle" fill="#222" font-size="12">14:05</text><text x="708" y="552" text-anchor="middle" fill="#222" font-size="12">15:05</text><rect x="787.5" y="538.5" width="14" height="14" fill="#fff" stroke="#333" stroke-width="1"/><circle cx="793" cy="543.5" r="2.6" fill="none" stroke="#111" stroke-width="1.5"/><path d="M795 545.5 l3.8 3.8" stroke="#111" stroke-width="1.8"/><rect x="776.5" y="152.5" width="8" height="8" fill="#fff" stroke="#333" stroke-width="1"/><rect x="778.7" y="154.7" width="3.6" height="3.6" fill="none" stroke="#111" stroke-width="1.5"/><rect x="766.5" y="407.5" width="8" height="8" fill="#fff" stroke="#333" stroke-width="1"/><path d="M768 411.5 h5" stroke="#111" stroke-width="1.2"/><rect x="776.5" y="407.5" width="8" height="8" fill="#fff" stroke="#333" stroke-width="1"/><path d="M778 409 l5 5 M783 409 l-5 5" stroke="#111" stroke-width="1.1"/><text x="27.7" y="164.5" font-size="12.5" fill="#111" textLength="50.5" lengthAdjust="spacingAndGlyphs">삼성전자</text><text x="81.5" y="164.5" font-size="12.5" fill="#111" textLength="76.5" lengthAdjust="spacingAndGlyphs">단순이동평균3</text><text x="167" y="164.5" font-size="12.5" fill="#111" textLength="49" lengthAdjust="spacingAndGlyphs">(5,20,60)</text><text x="220.3" y="164.5" font-size="12.5" fill="#111" textLength="64.2" lengthAdjust="spacingAndGlyphs">2025/10/02</text><text x="290" y="164.5" font-size="12.5" fill="#111" textLength="30.3" lengthAdjust="spacingAndGlyphs">15:35</text><text x="325.2" y="164.5" font-size="12.5" fill="#d8262c" textLength="37.8" lengthAdjust="spacingAndGlyphs">89,650</text><text x="367.8" y="164.5" font-size="12.5" fill="#2a2ac0" textLength="37" lengthAdjust="spacingAndGlyphs">89,612</text><text x="409.6" y="164.5" font-size="12.5" fill="#1f8a2e" textLength="36.5" lengthAdjust="spacingAndGlyphs">89,833</text><text x="672" y="176.5" font-size="12.5" fill="#d8262c" textLength="55.5" lengthAdjust="spacingAndGlyphs">H: -1.44%</text><text x="737.5" y="176.5" font-size="12.5" fill="#2a2ac0" textLength="47.5" lengthAdjust="spacingAndGlyphs">L: 3.73%</text><path d="M332.5 185.5 l3 -2.5 h11 M335.5 180.5 l-3 2.5" stroke="#d8262c" stroke-width="1" fill="none"/><text x="352" y="187.5" font-size="12.5" fill="#d8262c" textLength="116.5" lengthAdjust="spacingAndGlyphs">90,300 (10/02 11:10)</text><path d="M43 383.5 h15 M43 383.5 l3.5 2.5" stroke="#2a2ac0" stroke-width="1" fill="none"/><text x="63.5" y="387.8" font-size="12.5" fill="#3434a8" textLength="117.5" lengthAdjust="spacingAndGlyphs">85,800 (10/01 14:35)</text><text x="27.8" y="419" font-size="12.5" fill="#111" textLength="34.6" lengthAdjust="spacingAndGlyphs">거래량</text><text x="72.8" y="419" font-size="12.5" fill="#111" textLength="65" lengthAdjust="spacingAndGlyphs">2025/10/02</text><text x="143" y="419" font-size="12.5" fill="#111" textLength="29.2" lengthAdjust="spacingAndGlyphs">15:35</text><text x="177.5" y="419" font-size="12.5" fill="#1f86c8" textLength="54.4" lengthAdjust="spacingAndGlyphs">7,968,870</text><text x="838.5" y="552" font-size="12.5" fill="#222" textLength="30" lengthAdjust="spacingAndGlyphs" text-anchor="middle">15:35</text></svg><div style="position:absolute;left:27px;top:557px;width:848px;height:20px;background:#c0c0c0"></div><div style="position:absolute;left:27px;top:557px;width:17px;height:20px;background:#b2b2b2"></div><svg class="a" style="left:32px;top:563px" width="4" height="7"><path d="M4 0 L4 7 L0 3.5Z" fill="#000"/></svg><svg class="a" style="left:0;top:0" width="1109" height="848"><g fill="#575757" shape-rendering="crispEdges"><rect x="44" y="573" width="5" height="4"/><rect x="49" y="573" width="11" height="4"/><rect x="60" y="573" width="5" height="4"/><rect x="65" y="574" width="3" height="3"/><rect x="68" y="573" width="5" height="4"/><rect x="73" y="573" width="16" height="4"/><rect x="89" y="573" width="11" height="4"/><rect x="100" y="573" width="3" height="4"/><rect x="103" y="573" width="11" height="4"/><rect x="114" y="573" width="11" height="4"/><rect x="125" y="573" width="16" height="4"/><rect x="141" y="574" width="11" height="3"/><rect x="152" y="573" width="11" height="4"/><rect x="163" y="573" width="3" height="4"/><rect x="166" y="574" width="8" height="3"/><rect x="174" y="573" width="11" height="4"/><rect x="185" y="573" width="11" height="4"/><rect x="196" y="573" width="3" height="4"/><rect x="199" y="574" width="8" height="3"/><rect x="207" y="573" width="3" height="4"/><rect x="210" y="573" width="16" height="4"/><rect x="226" y="573" width="3" height="4"/><rect x="229" y="573" width="3" height="4"/><rect x="232" y="573" width="5" height="4"/><rect x="237" y="573" width="3" height="4"/><rect x="240" y="573" width="16" height="4"/><rect x="256" y="573" width="16" height="4"/><rect x="272" y="574" width="16" height="3"/><rect x="288" y="574" width="16" height="3"/><rect x="304" y="573" width="11" height="4"/><rect x="315" y="573" width="5" height="4"/><rect x="320" y="573" width="16" height="4"/><rect x="336" y="571" width="16" height="6"/><rect x="352" y="570" width="11" height="7"/><rect x="363" y="570" width="16" height="7"/><rect x="379" y="569" width="11" height="8"/><rect x="390" y="569" width="5" height="8"/><rect x="395" y="569" width="3" height="8"/><rect x="398" y="570" width="8" height="7"/><rect x="406" y="569" width="11" height="8"/><rect x="417" y="569" width="16" height="8"/><rect x="433" y="569" width="8" height="8"/><rect x="441" y="569" width="8" height="8"/><rect x="449" y="569" width="8" height="8"/><rect x="457" y="569" width="3" height="8"/><rect x="460" y="569" width="10" height="8"/></g></svg><div style="position:absolute;left:470px;top:557px;width:190px;height:20px;background:#717171"></div><svg class="a" style="left:0;top:0" width="1109" height="848"><path d="M474 577 V569.5 H490 L492 559.5 Q530 557.8 570 558.8 T644 558.5 Q649 559 649 565 V577Z" fill="#2d2d2d"/></svg><div style="position:absolute;left:470px;top:558px;width:4px;height:19px;background:#fff"></div><div style="position:absolute;left:471.2px;top:560px;width:1.6px;height:15px;background:#111"></div><div style="position:absolute;left:656px;top:558px;width:4px;height:19px;background:#fff"></div><div style="position:absolute;left:657.2px;top:560px;width:1.6px;height:15px;background:#111"></div><div style="position:absolute;left:661.0px;top:557px;width:16.5px;height:20px;background:#b4b4b4;border-left:1px solid #cfcfcf;border-right:1px solid #8e8e8e"></div><svg class="a" style="left:667.0px;top:563.5px" width="4.5" height="7.5"><path d="M0 0 L4.5 3.75 L0 7.5Z" fill="#000"/></svg><div style="position:absolute;left:678.2px;top:557px;width:16.5px;height:20px;background:#b4b4b4;border-left:1px solid #cfcfcf;border-right:1px solid #8e8e8e"></div><svg class="a" style="left:682.2px;top:563.5px" width="8.5" height="7.5"><path d="M4.25 0 L0 3.75 L4.25 7.5Z M8.5 0 L4.25 3.75 L8.5 7.5Z" fill="#000"/></svg><div style="position:absolute;left:695.4px;top:557px;width:16.5px;height:20px;background:#b4b4b4;border-left:1px solid #cfcfcf;border-right:1px solid #8e8e8e"></div><svg class="a" style="left:699.4px;top:563.5px" width="8.5" height="7.5"><path d="M0 0 L4.25 3.75 L0 7.5Z M4.25 0 L8.5 3.75 L4.25 7.5Z" fill="#000"/></svg><div style="position:absolute;left:714px;top:558px;width:52px;height:18px;background:#fff;border:1px solid #8e8e8e;border-right-color:#ddd;border-bottom-color:#ddd"></div><div class="t" style="left:714px;width:48px;text-align:right;top:561px;font-family:'Liberation Sans','Noto Sans CJK KR',sans-serif;font-size:12.5px">94</div><div style="position:absolute;left:767px;top:557px;width:108px;height:20px;background:#a9a9a9"></div><svg class="a" style="left:769px;top:561px" width="106" height="13" viewBox="0 0 106 13"><path d="M5.5 0.5 L0.5 6.5 L5.5 12.5Z M7.5 0.5 L12.5 6.5 L7.5 12.5Z" fill="#000"/><path d="M18.5 0.5 L24.5 6.5 L18.5 12.5Z M30.5 0.5 L24.5 6.5 L30.5 12.5Z" fill="#000"/><circle cx="43" cy="6.5" r="5" fill="#fff" stroke="#000" stroke-width="1.3"/><path d="M39.5 6.5 h7 M43 3 v7" stroke="#000" stroke-width="1.3"/><circle cx="61" cy="6.5" r="5" fill="#b8b8b8" stroke="#d2d2d2" stroke-width="1.3"/><path d="M57.5 6.5 h7" stroke="#d2d2d2" stroke-width="1.3"/><rect x="74.5" y="1.5" width="10" height="10" fill="#b8b8b8" stroke="#d2d2d2" stroke-width="1.2"/><path d="M76 10 L83 3 M76 3 h3 M83 10 h-3" stroke="#d2d2d2" stroke-width="1.2"/><rect x="91.5" y="1.5" width="10" height="10" fill="#fff" stroke="#000" stroke-width="1.2"/><path d="M91.5 1.5 L101.5 11.5 M101.5 1.5 L91.5 11.5" stroke="#000" stroke-width="1.1"/></svg><div style="position:absolute;left:27px;top:577px;width:875px;height:1px;background:#9a9a9a"></div><div style="position:absolute;left:27px;top:125px;width:1px;height:453px;background:#8f8f8f"></div></body></html>
